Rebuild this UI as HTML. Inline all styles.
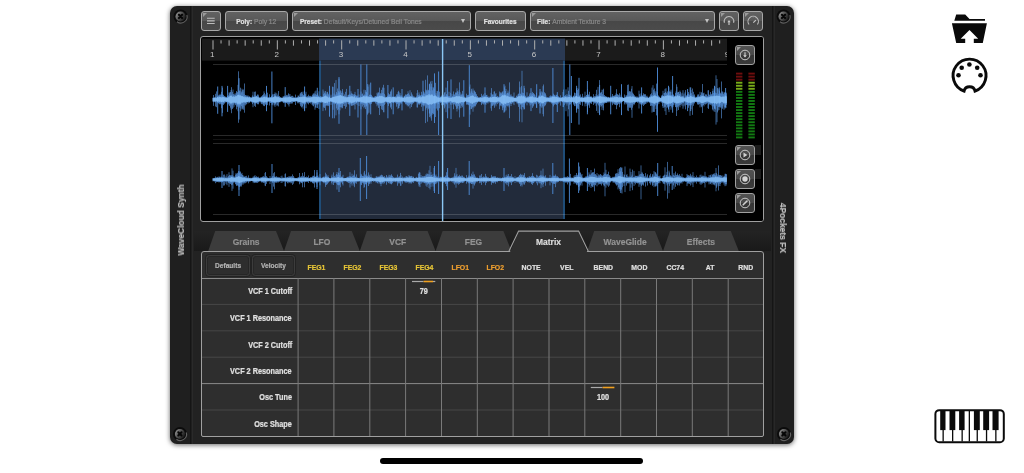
<!DOCTYPE html>
<html><head><meta charset="utf-8">
<style>
*{margin:0;padding:0;box-sizing:border-box}
html,body{width:1024px;height:473px;overflow:hidden;background:#fff;font-family:"Liberation Sans",sans-serif}
body>*{will-change:transform}
.abs{position:absolute}
#panel{position:absolute;left:170px;top:6px;width:624px;height:438px;border-radius:7px;background:#1f1f1f;box-shadow:0 1px 5px rgba(0,0,0,.6)}
#main{position:absolute;left:23px;top:0;width:580px;height:438px;background:#222}
.vl{position:absolute;top:0;height:438px;width:1px}
.screw{position:absolute;width:13px;height:13px;border-radius:50%;background:radial-gradient(circle at 45% 40%,#555 0,#3a3a3a 45%,#1a1a1a 75%);box-shadow:0 0 0 1px #0c0c0c, 1px 1px 1px rgba(255,255,255,.12)}
.screw:after{content:"";position:absolute;left:3px;top:3px;width:7px;height:7px;background:linear-gradient(45deg,transparent 40%,#0a0a0a 40%,#0a0a0a 60%,transparent 60%),linear-gradient(-45deg,transparent 40%,#0a0a0a 40%,#0a0a0a 60%,transparent 60%)}
.btn{position:absolute;top:11px;height:20px;border:1px solid #a8a8a8;border-radius:3px;background:linear-gradient(#626262 0,#585858 50%,#474747 50%,#4b4b4b 100%);color:#e2e2e2;font-size:7.55px;font-weight:bold;line-height:19.5px;white-space:nowrap;overflow:hidden}
.btn .c{position:absolute;left:1px;top:1px;width:0;height:0;border-top:4px solid #9a9a9a;border-right:4px solid transparent}
.btn .dim{color:#8a8a8a;font-weight:normal;font-size:7.8px}
i.x{font-style:normal;display:inline-block;transform:scaleX(0.86);transform-origin:50% 50%;-webkit-text-stroke:0.22px currentColor}
i.l{transform-origin:0 50%}
i.r{transform-origin:100% 50%}
.sbtn{position:absolute;left:735.3px;width:20.4px;height:20px;border:1px solid #a0a0a0;border-radius:3px;background:linear-gradient(#525252 0,#494949 50%,#363636 50%,#3a3a3a 100%)}
.sbtn .c{position:absolute;left:1px;top:1px;width:0;height:0;border-top:4px solid #9a9a9a;border-right:4px solid transparent}
#wbox{position:absolute;left:200px;top:36px;width:564px;height:186px;border:1px solid #a0a0a0;border-radius:3px;background:#000;overflow:hidden}
.tab{position:absolute;top:231px;height:21px}
.tabt{position:absolute;top:231px;height:21px;line-height:21px;text-align:center;color:#9a9a9a;font-size:9.5px;font-weight:bold}
#mtx{position:absolute;left:201px;top:251px;width:563px;height:186px;border:1px solid #a0a0a0;border-radius:3px 3px 2px 2px;background:#2e2e2e}
.hd{position:absolute;top:263px;width:36px;text-align:center;font-size:8px;font-weight:bold;color:#e0e0e0;line-height:10px}
.rl{position:absolute;left:203px;width:89px;text-align:right;font-size:8.47px;font-weight:bold;color:#e0e0e0;line-height:10px}
.mb{position:absolute;top:255px;height:21px;border:1px solid #3c3c3c;box-shadow:0 0 0 1px #222, inset 0 0 0 1px #262626;border-radius:3.5px;font-size:7.65px;font-weight:bold;color:#b4b4b4;text-align:center;line-height:19px}
.side{position:absolute;font-size:9.35px;font-weight:bold;color:#bebebe;white-space:nowrap}
</style></head><body>
<div id="panel">
  <div class="vl" style="left:20px;background:#151515"></div>
  <div id="main"></div>
  <div class="vl" style="left:22px;background:#2a2a2a"></div>
  <div class="vl" style="left:602px;background:#151515"></div>
  <div class="vl" style="left:604px;background:#282828"></div>
</div>
<svg width="0" height="0" style="position:absolute"><defs><linearGradient id="sg" x1="0" y1="0" x2="1" y2="0.6"><stop offset="0" stop-color="#a8a8a8"/><stop offset="0.45" stop-color="#5c5c5c"/><stop offset="1" stop-color="#1a1a1a"/></linearGradient></defs></svg>
<svg class="abs" style="left:172px;top:8px" width="18" height="18" viewBox="-8.6 -8.5 18 18">
<circle r="7" fill="#0b0b0b"/>
<path d="M6.3 -1.5A6.3 6.3 0 0 1 -3.6 5.2" fill="none" stroke="#6c6c6c" stroke-width="1.1" opacity="0.9"/>
<circle r="5.1" fill="url(#sg)"/>
<path d="M-1.7 -1.7L1.5 1.5M1.5 -1.7L-1.7 1.5" stroke="#050505" stroke-width="2" stroke-linecap="round"/>
</svg><svg class="abs" style="left:775px;top:8px" width="18" height="18" viewBox="-8.6 -8.5 18 18">
<circle r="7" fill="#0b0b0b"/>
<path d="M6.3 -1.5A6.3 6.3 0 0 1 -3.6 5.2" fill="none" stroke="#6c6c6c" stroke-width="1.1" opacity="0.9"/>
<circle r="5.1" fill="url(#sg)"/>
<path d="M-1.7 -1.7L1.5 1.5M1.5 -1.7L-1.7 1.5" stroke="#050505" stroke-width="2" stroke-linecap="round"/>
</svg><svg class="abs" style="left:171px;top:424.5px" width="18" height="18" viewBox="-9 -9 18 18">
<circle r="7" fill="#0b0b0b"/>
<path d="M6.3 -1.5A6.3 6.3 0 0 1 -3.6 5.2" fill="none" stroke="#6c6c6c" stroke-width="1.1" opacity="0.9"/>
<circle r="5.1" fill="url(#sg)"/>
<path d="M-1.7 -1.7L1.5 1.5M1.5 -1.7L-1.7 1.5" stroke="#050505" stroke-width="2" stroke-linecap="round"/>
</svg><svg class="abs" style="left:774.5px;top:424.5px" width="18" height="18" viewBox="-9 -9 18 18">
<circle r="7" fill="#0b0b0b"/>
<path d="M6.3 -1.5A6.3 6.3 0 0 1 -3.6 5.2" fill="none" stroke="#6c6c6c" stroke-width="1.1" opacity="0.9"/>
<circle r="5.1" fill="url(#sg)"/>
<path d="M-1.7 -1.7L1.5 1.5M1.5 -1.7L-1.7 1.5" stroke="#050505" stroke-width="2" stroke-linecap="round"/>
</svg>

<div class="side" style="left:181px;top:220px;transform:translate(-50%,-50%) rotate(-90deg)"><i class="x" style="transform:scaleX(0.9)">WaveCloud Synth</i></div>
<div class="side" style="left:783px;top:228px;transform:translate(-50%,-50%) rotate(90deg)"><i class="x" style="transform:scaleX(0.9)">4Pockets FX</i></div>

<!-- toolbar -->
<div class="btn" style="left:201px;width:20px"><span class="c"></span>
  <svg class="abs" style="left:0;top:0" width="18" height="18"><path d="M5 6.3H12.7M5 8.9H12.7M5 11.5H12.7" stroke="#bdbdbd" stroke-width="1.1"/></svg>
</div>
<div class="btn" style="left:225px;width:63px;text-align:center"><i class="x">Poly: <span class="dim">Poly 12</span></i></div>
<div class="btn" style="left:292px;width:179px;padding-left:7px"><span class="c"></span><i class="x l">Preset: <span class="dim">Default/Keys/Detuned Bell Tones</span></i>
  <div class="abs" style="left:167.8px;top:7.2px;width:0;height:0;border-left:2.7px solid transparent;border-right:2.7px solid transparent;border-top:4px solid #c4c4c4"></div></div>
<div class="btn" style="left:475px;width:51px;text-align:center"><i class="x">Favourites</i></div>
<div class="btn" style="left:530px;width:185px;padding-left:6px"><span class="c"></span><i class="x l">File: <span class="dim">Ambient Texture 3</span></i>
  <div class="abs" style="left:173.6px;top:7.2px;width:0;height:0;border-left:2.7px solid transparent;border-right:2.7px solid transparent;border-top:4px solid #c4c4c4"></div></div>
<div class="btn" style="left:719px;width:20px"><span class="c"></span>
  <svg class="abs" style="left:0;top:0" width="18" height="18" viewBox="0 0 18 18"><path d="M4.45 10.8A4.8 4.8 0 1 1 13.55 10.8" fill="none" stroke="#bdbdbd" stroke-width="1.1"/><path d="M9 8.0L10.7 10.3H7.3Z" fill="#c8c8c8"/><rect x="8.4" y="10" width="1.2" height="3" fill="#c4c4c4"/></svg></div>
<div class="btn" style="left:743px;width:20px"><span class="c"></span>
  <svg class="abs" style="left:0;top:0" width="18" height="18" viewBox="0 0 18 18"><path d="M5.0 12.5A5.2 5.2 0 1 1 13.4 12.5" fill="none" stroke="#bdbdbd" stroke-width="1.1"/><path d="M9.3 10.7L11.9 8.1" stroke="#c4c4c4" stroke-width="1.2"/><path d="M9.2 4.6V5.5M6.6 5.4L7 6.1M11.8 5.4L11.4 6.1" stroke="#aaa" stroke-width="0.6"/></svg></div>

<!-- waveform -->
<div id="wbox">
  <svg class="abs" style="left:-201px;top:-37px" width="1024" height="260" viewBox="0 0 1024 260">
    <rect x="202" y="38.6" width="525" height="22" fill="#1b1b1b"/>
    <rect x="319" y="38.6" width="246" height="22" fill="#2b3a53"/>
    <rect x="319" y="60.6" width="246" height="158.4" fill="#222b3b"/>
    <rect x="319" y="60.6" width="2" height="158.4" fill="#1f4d78"/>
    <rect x="563" y="60.6" width="2" height="158.4" fill="#1f4d78"/>
    <path d="M213 64.5H727M213 135.5H727M213 143.5H727M213 214.5H727" stroke="rgba(255,255,255,0.16)" stroke-width="1"/>
    <path d="M213 139.5H727" stroke="rgba(255,255,255,0.07)" stroke-width="1"/>
    <defs><clipPath id="rc"><rect x="202" y="38.6" width="525" height="22"/></clipPath></defs><g clip-path="url(#rc)"><g id="ticks" stroke="#b0b0b0" stroke-width="1"><path d="M213.00 40.3V49.5"/><path d="M221.04 40.3V43.5"/><path d="M229.09 40.3V45.7"/><path d="M237.13 40.3V43.5"/><path d="M245.17 40.3V45.7"/><path d="M253.21 40.3V43.5"/><path d="M261.25 40.3V45.7"/><path d="M269.30 40.3V43.5"/><path d="M277.34 40.3V49.5"/><path d="M285.38 40.3V43.5"/><path d="M293.43 40.3V45.7"/><path d="M301.47 40.3V43.5"/><path d="M309.51 40.3V45.7"/><path d="M317.55 40.3V43.5"/><path d="M325.60 40.3V45.7"/><path d="M333.64 40.3V43.5"/><path d="M341.68 40.3V49.5"/><path d="M349.72 40.3V43.5"/><path d="M357.76 40.3V45.7"/><path d="M365.81 40.3V43.5"/><path d="M373.85 40.3V45.7"/><path d="M381.89 40.3V43.5"/><path d="M389.94 40.3V45.7"/><path d="M397.98 40.3V43.5"/><path d="M406.02 40.3V49.5"/><path d="M414.06 40.3V43.5"/><path d="M422.11 40.3V45.7"/><path d="M430.15 40.3V43.5"/><path d="M438.19 40.3V45.7"/><path d="M446.23 40.3V43.5"/><path d="M454.27 40.3V45.7"/><path d="M462.32 40.3V43.5"/><path d="M470.36 40.3V49.5"/><path d="M478.40 40.3V43.5"/><path d="M486.44 40.3V45.7"/><path d="M494.49 40.3V43.5"/><path d="M502.53 40.3V45.7"/><path d="M510.57 40.3V43.5"/><path d="M518.62 40.3V45.7"/><path d="M526.66 40.3V43.5"/><path d="M534.70 40.3V49.5"/><path d="M542.74 40.3V43.5"/><path d="M550.79 40.3V45.7"/><path d="M558.83 40.3V43.5"/><path d="M566.87 40.3V45.7"/><path d="M574.91 40.3V43.5"/><path d="M582.96 40.3V45.7"/><path d="M591.00 40.3V43.5"/><path d="M599.04 40.3V49.5"/><path d="M607.08 40.3V43.5"/><path d="M615.12 40.3V45.7"/><path d="M623.17 40.3V43.5"/><path d="M631.21 40.3V45.7"/><path d="M639.25 40.3V43.5"/><path d="M647.30 40.3V45.7"/><path d="M655.34 40.3V43.5"/><path d="M663.38 40.3V49.5"/><path d="M671.42 40.3V43.5"/><path d="M679.47 40.3V45.7"/><path d="M687.51 40.3V43.5"/><path d="M695.55 40.3V45.7"/><path d="M703.59 40.3V43.5"/><path d="M711.63 40.3V45.7"/><path d="M719.68 40.3V43.5"/><path d="M727.72 40.3V49.5"/></g>
    <g font-family="Liberation Sans" font-size="8" fill="#c8c8c8" text-anchor="middle"><text x="212.35" y="57.3">1</text><text x="276.69" y="57.3">2</text><text x="341.03" y="57.3">3</text><text x="405.37" y="57.3">4</text><text x="469.71" y="57.3">5</text><text x="534.05" y="57.3">6</text><text x="598.39" y="57.3">7</text><text x="662.73" y="57.3">8</text><text x="727.07" y="57.3">9</text></g></g>
    <g stroke="#4f8edc" stroke-width="0.9"><path d="M217.7 86.5V113.8M222.0 85.9V116.3M227.6 85.9V111.9M239.0 78.2V119.5M266.5 85.9V111.2M271.9 71.5V123.3M285.2 87.1V106.8M304.6 86.5V111.2M317.3 87.8V108.0M329.5 85.8V116.7M332.7 86.6V118.3M339.0 77.0V123.8M349.8 85.8V115.9M358.0 89.0V117.5M360.9 64.4V135.0M366.8 64.4V135.0M370.7 82.6V114.3M387.9 85.0V118.3M393.2 87.4V114.3M402.0 89.0V110.4M423.0 80.7V111.1M429.4 84.2V113.5M434.5 73.4V123.0M438.6 71.5V135.0M447.6 81.0V118.3M451.0 79.4V119.0M463.8 80.2V116.7M469.3 65.2V127.0M485.0 87.4V112.7M504.0 84.2V112.7M524.0 85.8V109.5M531.0 88.2V111.1M536.7 84.2V108.0M540.0 89.0V113.5M552.9 68.0V123.0M557.3 92.1V112.0M569.8 64.4V135.0M571.4 76.0V123.0M576.6 85.8V112.7M579.0 77.8V124.6M587.4 81.0V114.3M599.6 85.0V115.1M610.7 85.8V114.3M621.5 84.2V115.1M641.6 87.4V113.5M657.5 67.5V131.8M668.5 85.8V109.5M672.6 76.0V112.7M687.6 89.0V111.1M690.7 87.4V111.1M714.5 85.8V108.8M719.3 87.4V106.4M725.6 88.0V107.0M239.0 165.0V196.0M272.0 164.0V193.0M339.0 168.0V192.0M360.3 158.0V201.0M366.6 156.0V199.0M434.5 166.0V193.0M438.6 161.0V194.0M469.2 161.0V195.0M447.6 168.0V190.0M552.8 163.0V194.0M569.4 158.5V203.0M578.6 162.5V193.0M620.8 167.0V193.0M657.7 163.0V196.0M672.2 166.0V190.0M587.4 168.0V191.0M504.0 168.0V191.0M317.0 170.0V189.0M222.0 171.0V188.0"/></g>
<g stroke="#5c9be8" stroke-width="0.6"><path d="M213.0 97.6V101.6M213.5 95.0V105.9M214.0 97.4V101.7M214.5 97.9V101.7M215.0 96.9V102.3M215.5 93.8V106.5M216.0 97.7V101.9M216.5 91.4V107.2M217.0 96.5V102.5M217.5 97.0V102.3M218.0 95.5V103.4M218.5 95.9V103.0M219.0 94.9V103.5M219.5 95.2V103.8M220.0 93.8V104.6M220.5 95.2V103.5M221.0 94.6V103.9M221.5 91.8V108.2M222.0 94.1V104.1M222.5 87.6V112.9M223.0 94.6V104.5M223.5 95.1V104.9M224.0 96.7V103.3M224.5 96.2V103.6M225.0 96.2V102.7M225.5 97.7V101.4M226.0 97.1V102.4M226.5 97.8V101.8M227.0 96.8V102.2M227.5 96.0V102.5M228.0 96.0V104.0M228.5 95.3V103.7M229.0 92.5V105.3M229.5 93.4V106.0M230.0 92.1V104.9M230.5 92.1V107.7M231.0 90.0V109.6M231.5 87.2V113.2M232.0 94.4V105.2M232.5 91.8V109.0M233.0 89.6V108.0M233.5 94.2V104.7M234.0 94.1V106.8M234.5 95.1V103.1M235.0 93.3V104.4M235.5 94.7V105.2M236.0 93.2V104.2M236.5 91.0V109.3M237.0 92.3V106.6M237.5 92.2V106.7M238.0 84.9V111.2M238.5 71.3V122.8M239.0 90.6V106.3M239.5 90.7V107.7M240.0 93.6V105.7M240.5 87.7V111.3M241.0 91.2V108.6M241.5 92.3V106.2M242.0 88.7V109.6M242.5 89.8V108.8M243.0 91.7V107.5M243.5 89.5V109.7M244.0 94.0V104.8M244.5 83.5V112.7M245.0 95.5V103.2M245.5 95.0V105.4M246.0 95.6V103.8M246.5 95.5V104.4M247.0 97.4V102.0M247.5 95.8V102.2M248.0 95.3V103.6M248.5 96.7V102.1M249.0 96.7V102.9M249.5 96.3V102.7M250.0 97.2V102.0M250.5 97.1V101.3M251.0 97.8V101.4M251.5 97.6V102.0M252.0 96.7V102.7M252.5 95.4V104.1M253.0 91.7V107.2M253.5 97.1V102.4M254.0 95.9V102.8M254.5 91.8V105.9M255.0 94.9V104.3M255.5 91.5V106.9M256.0 96.1V103.1M256.5 95.8V103.4M257.0 95.6V102.9M257.5 94.6V104.0M258.0 94.4V104.5M258.5 95.4V104.1M259.0 97.3V101.7M259.5 97.4V102.4M260.0 98.0V101.3M260.5 97.3V102.0M261.0 96.8V103.3M261.5 96.5V104.1M262.0 96.0V102.6M262.5 95.3V103.9M263.0 95.1V104.7M263.5 94.2V105.5M264.0 91.4V106.1M264.5 93.0V106.1M265.0 96.1V103.5M265.5 94.4V104.5M266.0 96.2V104.8M266.5 96.4V102.9M267.0 95.4V103.3M267.5 92.7V105.1M268.0 97.9V101.5M268.5 97.2V101.6M269.0 97.4V101.7M269.5 94.3V105.5M270.0 97.0V102.3M270.5 97.1V103.0M271.0 96.9V103.0M271.5 96.1V103.1M272.0 95.5V105.1M272.5 94.6V103.6M273.0 93.9V105.4M273.5 96.8V102.8M274.0 94.3V103.6M274.5 94.0V105.4M275.0 92.4V106.9M275.5 94.5V104.1M276.0 92.8V104.9M276.5 96.0V102.8M277.0 93.6V106.1M277.5 95.4V105.2M278.0 96.7V102.1M278.5 91.0V106.4M279.0 96.0V103.2M279.5 96.2V102.0M280.0 97.7V102.0M280.5 97.2V102.2M281.0 97.7V101.2M281.5 97.7V101.2M282.0 98.0V101.7M282.5 98.0V101.2M283.0 96.4V102.3M283.5 96.4V102.9M284.0 96.8V103.2M284.5 95.7V102.7M285.0 96.6V102.4M285.5 96.6V102.4M286.0 96.0V103.0M286.5 95.2V103.1M287.0 94.8V103.1M287.5 95.4V104.2M288.0 96.7V102.9M288.5 93.3V104.7M289.0 94.2V106.5M289.5 95.8V103.6M290.0 94.1V103.9M290.5 96.6V102.4M291.0 96.6V103.6M291.5 96.2V102.7M292.0 95.6V103.9M292.5 96.0V102.8M293.0 97.9V101.6M293.5 96.6V102.0M294.0 97.5V101.8M294.5 97.5V101.8M295.0 97.5V101.6M295.5 94.6V105.0M296.0 97.8V101.3M296.5 97.3V101.3M297.0 97.4V101.7M297.5 97.0V102.7M298.0 95.5V103.5M298.5 96.0V102.5M299.0 95.4V102.6M299.5 96.9V102.1M300.0 93.7V104.2M300.5 92.7V106.2M301.0 94.2V104.6M301.5 91.9V107.4M302.0 92.5V106.7M302.5 94.1V106.3M303.0 91.6V108.6M303.5 95.1V104.0M304.0 95.0V104.7M304.5 90.8V110.3M305.0 95.2V103.9M305.5 93.7V104.3M306.0 91.8V108.2M306.5 96.6V102.5M307.0 97.4V101.6M307.5 96.3V103.4M308.0 95.9V103.2M308.5 94.7V104.4M309.0 96.9V101.4M309.5 96.1V103.0M310.0 95.7V102.3M310.5 96.2V103.5M311.0 96.4V102.1M311.5 96.8V102.5M312.0 95.8V104.7M312.5 95.1V104.5M313.0 93.7V105.9M313.5 93.5V106.3M314.0 95.0V103.8M314.5 93.4V104.5M315.0 91.4V109.7M315.5 94.2V107.4M316.0 90.5V107.8M316.5 94.7V104.7M317.0 95.0V103.7M317.5 93.2V104.4M318.0 94.7V104.7M318.5 96.2V103.7M319.0 91.3V109.0M319.5 96.8V102.0M320.0 96.4V102.9M320.5 96.1V102.6M321.0 96.5V102.3M321.5 96.9V102.7M322.0 96.4V102.1M322.5 96.8V102.6M323.0 89.5V111.1M323.5 94.1V106.8M324.0 91.3V107.9M324.5 92.8V107.8M325.0 94.0V105.9M325.5 91.0V110.4M326.0 93.4V105.7M326.5 94.5V105.2M327.0 91.9V105.8M327.5 91.9V105.2M328.0 93.4V106.1M328.5 94.4V105.7M329.0 95.6V104.4M329.5 95.9V103.7M330.0 96.6V102.1M330.5 98.0V101.8M331.0 94.7V104.9M331.5 98.1V101.6M332.0 96.8V102.1M332.5 97.4V102.3M333.0 87.0V109.8M333.5 96.7V103.3M334.0 93.5V104.3M334.5 83.1V118.3M335.0 95.6V103.7M335.5 94.5V104.0M336.0 80.1V115.4M336.5 92.1V108.4M337.0 94.4V105.3M337.5 88.5V110.2M338.0 93.1V105.2M338.5 91.2V109.4M339.0 78.6V114.3M339.5 92.5V106.9M340.0 91.4V110.4M340.5 90.3V107.3M341.0 95.0V104.2M341.5 92.9V107.3M342.0 91.2V108.4M342.5 89.1V107.9M343.0 92.7V106.1M343.5 95.9V104.2M344.0 96.0V103.1M344.5 94.4V106.0M345.0 96.2V103.1M345.5 91.8V108.7M346.0 96.6V103.3M346.5 88.9V106.8M347.0 97.1V101.9M347.5 96.6V102.5M348.0 95.0V104.0M348.5 95.0V104.4M349.0 94.4V104.2M349.5 94.8V104.6M350.0 94.5V103.6M350.5 94.8V103.6M351.0 91.3V105.4M351.5 93.5V105.8M352.0 93.3V105.7M352.5 94.1V105.5M353.0 96.2V102.9M353.5 94.6V105.0M354.0 94.2V105.6M354.5 94.3V104.3M355.0 91.9V109.5M355.5 94.9V103.7M356.0 95.5V103.9M356.5 96.0V103.0M357.0 95.2V104.9M357.5 96.2V102.2M358.0 96.8V102.2M358.5 97.6V102.0M359.0 94.5V106.1M359.5 97.1V101.7M360.0 97.5V102.3M360.5 95.7V103.5M361.0 91.6V109.3M361.5 96.9V103.4M362.0 94.1V104.0M362.5 93.5V106.6M363.0 95.7V102.7M363.5 95.3V104.9M364.0 89.7V108.3M364.5 94.5V106.9M365.0 95.1V104.3M365.5 90.1V109.1M366.0 91.9V106.7M366.5 91.9V106.2M367.0 93.0V105.2M367.5 84.1V114.7M368.0 86.6V113.5M368.5 96.1V103.0M369.0 84.5V112.7M369.5 94.9V103.7M370.0 94.5V104.6M370.5 94.9V103.7M371.0 94.7V103.8M371.5 95.1V103.7M372.0 96.0V102.2M372.5 96.7V101.7M373.0 97.1V102.2M373.5 97.8V101.8M374.0 97.2V102.0M374.5 96.8V102.0M375.0 96.3V102.2M375.5 96.2V102.8M376.0 96.1V104.1M376.5 96.4V102.2M377.0 92.8V106.3M377.5 94.3V104.4M378.0 92.4V105.2M378.5 92.4V107.9M379.0 93.2V104.4M379.5 87.6V115.0M380.0 95.8V103.6M380.5 93.2V106.0M381.0 94.1V104.7M381.5 89.9V109.4M382.0 92.9V106.4M382.5 87.5V110.1M383.0 93.0V106.0M383.5 84.8V112.2M384.0 87.8V112.3M384.5 93.9V105.0M385.0 95.4V104.0M385.5 97.7V101.4M386.0 97.3V102.5M386.5 96.9V102.1M387.0 96.9V102.9M387.5 96.1V103.9M388.0 95.6V102.6M388.5 93.2V105.9M389.0 94.6V103.6M389.5 94.6V103.2M390.0 94.0V103.8M390.5 91.7V107.6M391.0 91.2V106.5M391.5 89.4V109.3M392.0 96.4V102.4M392.5 96.9V102.5M393.0 96.5V103.1M393.5 96.7V103.1M394.0 96.9V101.6M394.5 96.8V102.1M395.0 96.3V103.2M395.5 96.4V102.3M396.0 96.9V103.2M396.5 94.3V106.7M397.0 95.1V104.2M397.5 94.2V103.9M398.0 92.1V109.1M398.5 90.8V108.0M399.0 91.8V108.0M399.5 94.7V105.8M400.0 93.0V104.6M400.5 95.9V103.2M401.0 94.8V103.5M401.5 95.8V103.6M402.0 97.4V101.8M402.5 96.6V101.9M403.0 97.5V101.1M403.5 97.5V101.5M404.0 96.4V102.1M404.5 96.0V102.4M405.0 95.5V102.6M405.5 94.4V104.3M406.0 95.3V103.5M406.5 94.9V104.3M407.0 94.1V105.5M407.5 94.0V105.1M408.0 91.3V106.5M408.5 93.2V106.2M409.0 94.2V103.9M409.5 95.0V105.2M410.0 90.2V108.4M410.5 96.1V104.0M411.0 96.2V103.8M411.5 92.4V107.0M412.0 94.1V104.8M412.5 95.4V103.9M413.0 95.9V102.8M413.5 97.1V103.2M414.0 96.2V102.6M414.5 97.5V101.7M415.0 97.1V101.4M415.5 98.0V101.7M416.0 97.0V102.2M416.5 96.4V102.3M417.0 93.2V107.4M417.5 90.1V107.5M418.0 95.1V102.9M418.5 95.4V104.1M419.0 92.4V104.8M419.5 94.5V104.4M420.0 95.8V103.6M420.5 95.6V103.4M421.0 95.0V103.6M421.5 91.8V106.8M422.0 94.9V103.3M422.5 95.1V104.7M423.0 93.7V105.4M423.5 91.2V105.4M424.0 92.0V106.4M424.5 93.4V105.5M425.0 94.1V104.0M425.5 79.8V123.1M426.0 89.6V109.6M426.5 90.3V107.9M427.0 91.6V105.3M427.5 75.4V121.7M428.0 90.3V107.6M428.5 89.8V109.3M429.0 91.2V108.0M429.5 83.6V117.1M430.0 91.1V108.4M430.5 81.5V116.4M431.0 86.7V118.3M431.5 83.7V120.7M432.0 80.9V114.8M432.5 90.3V113.0M433.0 87.2V114.3M433.5 87.6V113.9M434.0 89.1V108.3M434.5 94.0V104.0M435.0 94.8V105.6M435.5 82.8V117.0M436.0 93.1V108.7M436.5 95.8V103.3M437.0 90.9V108.4M437.5 91.2V110.5M438.0 94.8V104.3M438.5 96.2V104.1M439.0 97.3V101.9M439.5 91.7V108.2M440.0 96.4V102.1M440.5 96.9V103.0M441.0 96.8V101.6M441.5 95.5V105.3M442.0 96.8V102.7M442.5 96.1V103.4M443.0 95.9V104.2M443.5 94.6V105.1M444.0 95.9V104.5M444.5 92.7V108.4M445.0 92.0V106.6M445.5 95.8V103.6M446.0 87.6V112.2M446.5 94.1V104.4M447.0 94.8V104.0M447.5 95.7V102.9M448.0 96.2V102.9M448.5 96.2V102.6M449.0 91.8V108.3M449.5 96.0V102.4M450.0 97.0V102.9M450.5 92.8V104.6M451.0 97.6V101.9M451.5 96.9V103.1M452.0 93.9V104.9M452.5 96.2V103.0M453.0 95.7V103.9M453.5 91.5V109.2M454.0 94.2V104.3M454.5 94.6V104.4M455.0 95.8V103.2M455.5 92.7V105.6M456.0 92.3V106.7M456.5 92.8V108.9M457.0 88.3V111.5M457.5 91.1V108.5M458.0 92.0V106.2M458.5 94.3V105.8M459.0 90.3V109.6M459.5 82.4V117.4M460.0 91.9V108.3M460.5 95.3V103.9M461.0 93.5V107.9M461.5 94.8V105.8M462.0 94.4V104.8M462.5 90.9V107.3M463.0 94.1V105.6M463.5 95.6V103.8M464.0 96.4V102.2M464.5 97.5V102.2M465.0 97.5V101.4M465.5 98.2V101.0M466.0 97.4V101.9M466.5 93.7V104.7M467.0 95.9V103.8M467.5 95.0V104.7M468.0 96.2V104.0M468.5 94.8V105.2M469.0 95.0V104.7M469.5 86.7V109.8M470.0 84.5V114.6M470.5 93.4V106.2M471.0 91.5V109.2M471.5 88.8V109.0M472.0 90.5V107.9M472.5 92.7V107.1M473.0 88.5V111.7M473.5 93.5V106.6M474.0 90.5V107.6M474.5 90.7V106.3M475.0 91.8V105.8M475.5 92.2V106.4M476.0 93.9V104.7M476.5 94.4V104.2M477.0 96.3V102.7M477.5 96.0V102.6M478.0 97.7V102.0M478.5 97.8V101.2M479.0 97.4V101.9M479.5 97.6V101.9M480.0 97.4V101.4M480.5 97.2V102.0M481.0 97.1V102.4M481.5 93.8V105.1M482.0 96.4V103.9M482.5 95.5V103.4M483.0 96.0V102.7M483.5 94.4V104.5M484.0 96.6V103.6M484.5 96.2V103.1M485.0 93.1V104.6M485.5 95.9V103.8M486.0 95.3V104.8M486.5 95.0V102.9M487.0 94.8V103.2M487.5 96.8V102.5M488.0 96.7V103.6M488.5 97.8V101.3M489.0 96.3V102.5M489.5 97.5V101.6M490.0 97.1V102.5M490.5 96.6V102.4M491.0 92.8V108.3M491.5 88.1V110.8M492.0 94.4V105.9M492.5 94.9V105.7M493.0 94.0V105.6M493.5 95.6V104.3M494.0 91.7V105.3M494.5 91.3V107.8M495.0 95.0V104.0M495.5 93.8V104.5M496.0 93.1V106.3M496.5 96.7V103.3M497.0 96.8V102.5M497.5 95.9V104.1M498.0 96.5V101.9M498.5 96.9V103.2M499.0 97.8V101.7M499.5 91.5V109.2M500.0 94.1V105.6M500.5 92.7V105.2M501.0 92.2V106.2M501.5 93.6V104.3M502.0 92.8V106.3M502.5 91.8V110.2M503.0 91.1V108.1M503.5 94.5V106.7M504.0 93.4V105.6M504.5 87.3V111.8M505.0 85.7V111.5M505.5 91.0V107.5M506.0 89.0V110.4M506.5 94.4V105.8M507.0 93.1V105.1M507.5 92.8V106.4M508.0 90.6V105.7M508.5 93.4V105.4M509.0 92.2V107.4M509.5 82.4V118.2M510.0 95.9V103.0M510.5 95.4V104.1M511.0 94.2V106.0M511.5 95.8V104.0M512.0 96.5V102.7M512.5 96.6V102.3M513.0 95.9V103.7M513.5 96.9V101.9M514.0 92.5V105.1M514.5 97.9V101.4M515.0 98.1V101.1M515.5 97.4V101.9M516.0 97.8V101.7M516.5 95.8V102.4M517.0 95.6V103.6M517.5 96.5V102.8M518.0 94.4V104.3M518.5 93.8V106.9M519.0 93.5V104.3M519.5 81.5V121.7M520.0 87.3V108.8M520.5 93.9V104.6M521.0 93.5V104.6M521.5 86.1V109.6M522.0 70.8V122.3M522.5 92.6V107.0M523.0 95.1V104.0M523.5 93.0V107.5M524.0 94.5V105.1M524.5 88.2V109.1M525.0 95.3V103.5M525.5 96.0V103.1M526.0 97.0V102.1M526.5 97.4V102.0M527.0 92.3V105.3M527.5 97.3V101.8M528.0 96.3V102.6M528.5 96.4V102.7M529.0 96.3V103.3M529.5 94.5V103.4M530.0 93.1V105.6M530.5 96.3V103.0M531.0 92.9V104.9M531.5 95.3V103.6M532.0 94.1V103.4M532.5 91.9V107.9M533.0 93.5V106.6M533.5 93.0V105.7M534.0 94.3V103.3M534.5 94.3V103.4M535.0 95.2V104.4M535.5 96.7V103.6M536.0 96.8V102.4M536.5 92.7V107.5M537.0 97.6V102.5M537.5 97.9V102.0M538.0 97.7V101.5M538.5 96.2V103.6M539.0 95.2V103.5M539.5 95.5V102.8M540.0 92.3V105.7M540.5 93.3V106.1M541.0 91.3V107.4M541.5 95.0V104.2M542.0 91.7V107.8M542.5 92.5V106.3M543.0 86.2V114.1M543.5 84.5V116.4M544.0 94.3V104.2M544.5 92.2V106.4M545.0 93.1V105.7M545.5 93.6V105.1M546.0 95.4V103.8M546.5 97.2V102.4M547.0 97.7V101.5M547.5 97.0V102.2M548.0 98.2V101.3M548.5 97.2V102.1M549.0 98.2V101.5M549.5 96.6V102.3M550.0 96.2V102.0M550.5 95.4V102.5M551.0 96.8V102.2M551.5 95.8V103.6M552.0 96.3V102.6M552.5 96.4V103.4M553.0 95.4V104.9M553.5 93.7V106.4M554.0 94.8V104.5M554.5 94.9V104.7M555.0 95.8V103.5M555.5 96.3V104.0M556.0 94.8V104.6M556.5 95.0V104.9M557.0 94.7V103.8M557.5 96.1V103.0M558.0 97.1V101.8M558.5 96.2V103.6M559.0 97.5V102.2M559.5 97.3V102.5M560.0 97.2V102.1M560.5 95.3V105.6M561.0 97.4V101.1M561.5 97.8V101.2M562.0 97.5V101.4M562.5 97.0V102.4M563.0 92.0V107.0M563.5 89.6V107.1M564.0 96.3V102.5M564.5 95.9V105.2M565.0 96.1V102.3M565.5 94.9V103.5M566.0 89.3V111.2M566.5 95.8V103.4M567.0 94.0V105.6M567.5 95.6V103.5M568.0 87.3V116.4M568.5 90.8V109.3M569.0 95.0V103.1M569.5 94.6V104.5M570.0 94.9V104.8M570.5 95.7V104.0M571.0 96.0V102.1M571.5 96.7V102.8M572.0 96.9V102.3M572.5 97.2V101.9M573.0 96.4V102.2M573.5 95.6V104.6M574.0 96.3V103.8M574.5 92.6V105.9M575.0 93.2V106.2M575.5 95.8V103.7M576.0 93.2V105.8M576.5 88.5V109.9M577.0 87.9V108.7M577.5 90.0V108.5M578.0 93.3V106.6M578.5 88.7V109.0M579.0 95.1V103.6M579.5 95.8V104.1M580.0 96.9V102.5M580.5 94.4V104.9M581.0 96.8V101.7M581.5 96.9V102.1M582.0 96.8V102.3M582.5 93.8V105.8M583.0 97.3V102.0M583.5 97.8V101.7M584.0 96.3V102.2M584.5 96.9V102.2M585.0 91.7V106.4M585.5 96.4V103.4M586.0 96.5V104.0M586.5 95.0V103.0M587.0 95.0V106.1M587.5 89.3V112.2M588.0 93.9V104.7M588.5 95.1V104.5M589.0 94.7V105.7M589.5 91.8V107.8M590.0 96.4V103.1M590.5 96.4V103.4M591.0 97.0V103.0M591.5 96.3V104.0M592.0 96.9V101.6M592.5 97.9V101.8M593.0 97.1V102.1M593.5 94.2V104.9M594.0 97.8V101.7M594.5 96.1V103.5M595.0 96.8V103.2M595.5 96.2V103.2M596.0 94.1V105.8M596.5 89.8V110.9M597.0 95.8V104.4M597.5 95.2V103.6M598.0 86.9V113.0M598.5 95.6V104.9M599.0 93.9V106.1M599.5 80.1V114.4M600.0 93.8V107.1M600.5 92.5V105.2M601.0 93.0V105.5M601.5 91.9V106.4M602.0 89.7V109.9M602.5 94.2V105.3M603.0 89.9V107.7M603.5 88.7V110.4M604.0 95.8V103.3M604.5 95.0V103.5M605.0 96.4V103.1M605.5 96.2V102.7M606.0 96.2V103.0M606.5 97.2V103.0M607.0 96.7V103.0M607.5 97.3V101.8M608.0 97.3V102.0M608.5 96.9V102.4M609.0 97.6V101.2M609.5 97.9V101.4M610.0 97.5V102.7M610.5 97.1V101.8M611.0 96.9V101.6M611.5 97.6V101.6M612.0 96.0V103.3M612.5 94.0V105.2M613.0 95.9V102.5M613.5 95.8V103.5M614.0 96.0V103.7M614.5 95.5V104.5M615.0 95.5V104.6M615.5 94.9V104.9M616.0 93.3V104.6M616.5 89.2V109.2M617.0 94.2V105.4M617.5 94.3V105.1M618.0 94.6V104.1M618.5 95.1V103.6M619.0 96.3V103.5M619.5 93.2V107.2M620.0 94.7V104.0M620.5 96.7V102.9M621.0 97.0V102.8M621.5 97.4V102.8M622.0 97.2V102.1M622.5 96.8V101.6M623.0 97.9V101.0M623.5 97.9V100.9M624.0 98.2V101.3M624.5 94.5V104.4M625.0 96.7V102.6M625.5 97.0V102.7M626.0 95.3V104.5M626.5 95.8V103.4M627.0 95.0V103.7M627.5 84.9V110.5M628.0 91.6V107.4M628.5 84.5V111.1M629.0 92.7V105.6M629.5 91.0V107.7M630.0 91.9V107.6M630.5 91.4V107.7M631.0 94.4V105.1M631.5 88.8V109.8M632.0 86.1V117.8M632.5 92.6V107.7M633.0 94.3V105.6M633.5 93.7V104.0M634.0 95.1V104.6M634.5 95.5V104.4M635.0 96.9V103.0M635.5 96.4V102.5M636.0 96.8V102.0M636.5 97.5V101.8M637.0 96.1V102.0M637.5 97.1V102.9M638.0 97.5V101.9M638.5 97.7V102.4M639.0 90.7V108.5M639.5 94.2V103.6M640.0 96.5V102.9M640.5 95.8V103.9M641.0 93.4V104.8M641.5 95.5V104.1M642.0 95.8V103.4M642.5 95.6V104.7M643.0 95.1V103.6M643.5 93.3V106.0M644.0 94.7V103.9M644.5 94.2V104.9M645.0 94.8V103.7M645.5 94.2V103.8M646.0 96.5V103.9M646.5 96.5V102.1M647.0 95.6V102.8M647.5 96.8V102.4M648.0 97.8V102.1M648.5 97.8V101.7M649.0 96.8V102.4M649.5 96.9V102.6M650.0 95.8V103.3M650.5 94.2V106.0M651.0 95.3V105.5M651.5 93.3V105.6M652.0 87.6V112.6M652.5 95.1V105.8M653.0 85.2V111.8M653.5 89.7V111.9M654.0 92.7V106.7M654.5 88.5V111.9M655.0 91.3V105.8M655.5 93.4V104.8M656.0 91.4V109.0M656.5 83.6V115.4M657.0 96.2V102.5M657.5 92.0V105.8M658.0 95.5V104.3M658.5 95.6V102.5M659.0 96.3V103.8M659.5 97.0V101.6M660.0 98.1V101.2M660.5 97.9V102.2M661.0 97.6V101.5M661.5 95.9V102.4M662.0 95.0V103.1M662.5 94.7V106.1M663.0 90.8V107.8M663.5 96.1V102.7M664.0 92.9V107.8M664.5 92.9V106.8M665.0 88.9V111.2M665.5 92.0V106.8M666.0 88.2V115.0M666.5 93.3V105.0M667.0 92.7V108.0M667.5 91.4V107.1M668.0 94.1V106.0M668.5 92.7V108.6M669.0 87.2V112.1M669.5 91.6V106.7M670.0 91.2V105.7M670.5 92.0V106.0M671.0 89.7V109.7M671.5 95.0V106.5M672.0 91.7V107.8M672.5 95.1V103.9M673.0 94.4V106.9M673.5 94.7V105.2M674.0 96.1V102.8M674.5 96.3V103.4M675.0 95.5V105.2M675.5 93.0V107.1M676.0 91.4V107.1M676.5 84.3V116.0M677.0 86.8V110.8M677.5 92.4V107.3M678.0 92.5V105.7M678.5 92.0V110.0M679.0 91.8V106.4M679.5 93.9V105.2M680.0 90.6V107.3M680.5 92.1V104.7M681.0 94.4V104.7M681.5 96.5V103.9M682.0 92.8V105.8M682.5 96.2V103.1M683.0 90.2V108.7M683.5 95.7V103.0M684.0 93.7V106.4M684.5 98.2V101.1M685.0 92.4V105.3M685.5 90.1V109.4M686.0 95.9V103.4M686.5 95.5V105.0M687.0 95.3V104.6M687.5 94.4V104.3M688.0 94.1V105.1M688.5 92.0V107.8M689.0 93.6V105.7M689.5 94.9V105.3M690.0 87.4V115.8M690.5 93.5V105.3M691.0 90.1V109.2M691.5 93.2V105.3M692.0 95.2V104.1M692.5 88.5V114.9M693.0 95.5V103.3M693.5 91.8V105.8M694.0 95.4V103.2M694.5 94.4V103.4M695.0 96.5V102.0M695.5 97.6V101.9M696.0 97.2V102.0M696.5 97.4V102.0M697.0 96.5V102.8M697.5 95.3V104.0M698.0 94.1V105.0M698.5 94.6V104.4M699.0 96.1V103.7M699.5 96.3V104.0M700.0 91.8V107.4M700.5 95.2V103.6M701.0 94.7V105.4M701.5 92.2V107.2M702.0 93.1V106.1M702.5 84.0V113.0M703.0 94.5V105.2M703.5 93.2V105.1M704.0 92.7V106.4M704.5 96.0V104.1M705.0 95.8V102.6M705.5 94.4V104.5M706.0 94.4V104.2M706.5 94.6V103.5M707.0 96.4V103.3M707.5 96.2V102.8M708.0 90.4V108.1M708.5 90.2V109.0M709.0 94.2V105.2M709.5 95.2V103.8M710.0 95.4V103.9M710.5 92.0V104.7M711.0 94.5V104.8M711.5 94.4V104.3M712.0 93.7V106.2M712.5 91.1V109.4M713.0 88.6V110.4M713.5 93.1V106.4M714.0 90.5V111.4M714.5 90.9V108.1M715.0 86.7V112.0M715.5 92.6V109.5M716.0 75.3V124.6M716.5 93.2V105.7M717.0 79.0V122.2M717.5 88.1V112.4M718.0 88.2V110.7M718.5 93.7V107.0M719.0 89.3V110.0M719.5 90.9V107.3M720.0 94.0V105.0M720.5 92.7V107.6M721.0 93.8V106.7M721.5 81.5V118.4M722.0 91.5V108.2M722.5 91.6V108.8M723.0 93.4V106.3M723.5 94.2V104.3M724.0 91.9V109.8M724.5 92.7V107.4M725.0 92.6V108.7M725.5 92.6V107.7M726.0 92.4V108.0M726.5 93.3V105.0M213.0 178.1V181.4M213.5 178.4V180.6M214.0 178.4V181.2M214.5 177.9V181.5M215.0 178.2V181.1M215.5 176.4V183.2M216.0 177.8V181.2M216.5 177.4V182.2M217.0 177.9V182.0M217.5 176.9V181.9M218.0 177.4V181.8M218.5 177.7V181.7M219.0 176.3V182.6M219.5 177.2V181.8M220.0 176.7V181.9M220.5 177.2V182.0M221.0 177.4V182.3M221.5 176.7V182.4M222.0 176.8V182.0M222.5 177.6V182.2M223.0 177.2V182.0M223.5 174.7V185.6M224.0 177.2V181.4M224.5 174.5V185.4M225.0 177.4V181.2M225.5 177.6V181.8M226.0 175.7V183.9M226.5 177.7V181.6M227.0 174.1V185.2M227.5 177.4V181.4M228.0 177.4V182.2M228.5 175.9V183.0M229.0 172.3V186.9M229.5 175.0V183.5M230.0 176.3V182.8M230.5 175.1V184.0M231.0 176.0V183.6M231.5 175.2V185.2M232.0 168.4V190.9M232.5 175.3V184.7M233.0 170.7V188.7M233.5 176.6V182.4M234.0 176.2V182.9M234.5 177.3V182.1M235.0 176.8V182.1M235.5 174.7V184.2M236.0 173.1V184.3M236.5 173.8V185.9M237.0 175.1V185.4M237.5 172.8V185.6M238.0 173.5V185.0M238.5 171.0V186.4M239.0 171.7V189.9M239.5 172.7V187.0M240.0 171.0V186.6M240.5 172.1V186.3M241.0 173.7V185.1M241.5 174.2V186.5M242.0 172.9V184.3M242.5 175.0V182.8M243.0 175.2V184.8M243.5 176.8V182.8M244.0 175.9V183.8M244.5 176.9V182.9M245.0 177.0V181.7M245.5 176.1V183.2M246.0 177.4V181.9M246.5 175.8V182.5M247.0 178.1V181.7M247.5 177.4V181.2M248.0 177.8V181.8M248.5 175.4V183.3M249.0 178.5V181.0M249.5 178.3V181.5M250.0 177.6V181.3M250.5 178.2V181.3M251.0 178.5V180.8M251.5 178.3V180.9M252.0 177.8V180.9M252.5 177.9V181.2M253.0 176.7V182.5M253.5 177.5V181.8M254.0 176.1V183.1M254.5 176.5V182.6M255.0 175.1V182.7M255.5 177.3V182.7M256.0 177.1V182.0M256.5 176.2V182.9M257.0 176.8V182.4M257.5 177.0V182.9M258.0 177.9V181.5M258.5 176.7V182.2M259.0 177.9V181.5M259.5 178.3V181.4M260.0 177.6V181.1M260.5 177.7V181.1M261.0 177.2V181.8M261.5 177.5V182.2M262.0 177.0V182.7M262.5 176.6V181.9M263.0 177.2V182.3M263.5 176.1V182.8M264.0 176.8V182.7M264.5 176.8V182.6M265.0 173.0V185.6M265.5 172.0V186.1M266.0 176.9V182.2M266.5 176.1V183.9M267.0 177.9V181.1M267.5 177.4V181.5M268.0 178.1V181.6M268.5 178.1V181.3M269.0 178.6V180.6M269.5 178.0V181.2M270.0 176.0V184.1M270.5 178.3V181.5M271.0 177.6V181.4M271.5 178.2V181.0M272.0 177.5V181.7M272.5 176.4V182.5M273.0 176.0V182.9M273.5 173.2V186.6M274.0 176.4V182.0M274.5 172.1V189.3M275.0 176.9V182.6M275.5 176.7V182.5M276.0 177.5V182.2M276.5 176.2V182.8M277.0 177.2V182.0M277.5 177.3V181.7M278.0 176.8V182.9M278.5 177.6V181.8M279.0 177.1V181.7M279.5 177.4V181.7M280.0 178.1V180.8M280.5 178.0V180.9M281.0 176.3V182.8M281.5 178.3V180.6M282.0 175.6V183.0M282.5 177.7V181.5M283.0 177.7V181.1M283.5 177.6V181.8M284.0 178.1V180.9M284.5 177.7V181.6M285.0 174.1V186.2M285.5 173.4V186.5M286.0 177.2V182.1M286.5 177.9V181.7M287.0 177.1V181.6M287.5 177.1V182.8M288.0 176.9V183.4M288.5 177.5V181.8M289.0 176.0V182.6M289.5 177.3V182.1M290.0 176.3V182.7M290.5 177.0V182.0M291.0 176.2V183.4M291.5 176.3V182.7M292.0 177.0V181.7M292.5 174.4V184.9M293.0 178.0V181.3M293.5 176.0V183.7M294.0 177.6V181.5M294.5 177.8V181.3M295.0 178.3V181.3M295.5 178.3V180.6M296.0 178.3V180.8M296.5 178.3V180.8M297.0 178.2V181.4M297.5 178.3V181.2M298.0 177.2V181.3M298.5 177.5V181.3M299.0 177.1V181.8M299.5 173.0V184.3M300.0 176.3V183.4M300.5 177.6V181.8M301.0 177.1V182.3M301.5 176.1V183.0M302.0 176.8V183.2M302.5 172.9V187.3M303.0 176.9V182.0M303.5 175.9V182.2M304.0 177.1V181.4M304.5 172.1V187.3M305.0 177.5V182.2M305.5 177.1V181.6M306.0 177.4V181.8M306.5 176.5V181.8M307.0 177.5V181.3M307.5 177.1V181.9M308.0 177.7V181.6M308.5 175.5V183.0M309.0 178.4V181.0M309.5 178.0V181.0M310.0 177.7V181.5M310.5 177.2V182.2M311.0 177.2V181.4M311.5 177.2V182.1M312.0 177.9V181.6M312.5 176.5V183.1M313.0 175.7V183.2M313.5 176.0V183.6M314.0 175.7V182.8M314.5 170.0V187.5M315.0 176.5V182.5M315.5 177.2V181.8M316.0 176.3V183.1M316.5 175.8V183.5M317.0 172.4V187.0M317.5 176.0V182.4M318.0 175.5V182.9M318.5 177.3V181.9M319.0 177.0V181.9M319.5 177.6V181.7M320.0 174.0V185.3M320.5 177.2V181.9M321.0 178.4V180.9M321.5 178.2V181.4M322.0 177.5V181.7M322.5 177.3V181.8M323.0 177.6V182.3M323.5 176.7V182.4M324.0 176.8V183.4M324.5 177.1V182.3M325.0 176.2V182.8M325.5 172.7V186.9M326.0 175.7V184.9M326.5 174.3V184.8M327.0 176.3V182.7M327.5 176.5V184.2M328.0 175.1V182.7M328.5 176.9V182.5M329.0 177.8V181.5M329.5 178.0V181.5M330.0 178.2V181.1M330.5 178.3V181.1M331.0 178.1V181.2M331.5 176.4V182.8M332.0 174.6V184.5M332.5 177.2V181.5M333.0 177.7V182.1M333.5 172.4V185.0M334.0 176.7V182.9M334.5 175.9V182.4M335.0 176.7V182.8M335.5 176.8V182.2M336.0 174.9V183.0M336.5 174.0V183.6M337.0 172.0V189.6M337.5 174.7V184.6M338.0 175.2V185.2M338.5 172.8V185.2M339.0 172.7V184.4M339.5 175.3V185.2M340.0 174.7V183.5M340.5 171.0V187.3M341.0 177.1V181.9M341.5 176.5V182.6M342.0 177.2V182.0M342.5 176.6V184.1M343.0 174.8V185.5M343.5 178.1V181.0M344.0 177.9V181.5M344.5 178.3V180.9M345.0 178.2V181.5M345.5 178.1V181.0M346.0 178.0V181.2M346.5 177.9V181.5M347.0 177.1V181.7M347.5 176.8V182.2M348.0 177.3V182.3M348.5 176.6V183.1M349.0 177.4V181.6M349.5 176.2V182.9M350.0 172.2V187.5M350.5 176.4V182.3M351.0 176.5V184.0M351.5 177.1V182.9M352.0 173.7V185.6M352.5 176.3V182.1M353.0 176.2V182.8M353.5 175.5V183.7M354.0 174.6V185.7M354.5 170.3V187.2M355.0 176.2V183.4M355.5 177.2V182.7M356.0 177.1V182.1M356.5 174.4V183.7M357.0 177.9V181.8M357.5 177.5V181.7M358.0 178.1V181.1M358.5 178.0V181.6M359.0 177.9V181.6M359.5 178.3V181.0M360.0 177.4V181.5M360.5 176.1V182.4M361.0 173.8V184.4M361.5 174.6V185.1M362.0 176.1V183.2M362.5 175.9V182.6M363.0 176.0V182.6M363.5 176.2V183.6M364.0 172.6V187.9M364.5 170.9V187.0M365.0 175.7V183.5M365.5 174.5V184.4M366.0 176.2V184.0M366.5 176.1V184.4M367.0 176.5V182.4M367.5 175.7V182.4M368.0 176.8V182.8M368.5 172.4V186.0M369.0 174.6V184.2M369.5 175.6V183.7M370.0 177.1V182.6M370.5 177.1V181.8M371.0 174.3V183.8M371.5 177.0V181.9M372.0 177.9V181.0M372.5 177.6V181.2M373.0 177.9V180.9M373.5 178.1V181.8M374.0 177.6V181.6M374.5 177.9V181.2M375.0 178.1V181.1M375.5 178.0V181.4M376.0 176.6V182.7M376.5 176.3V182.0M377.0 177.6V182.4M377.5 176.7V183.0M378.0 176.8V183.7M378.5 176.7V181.8M379.0 176.6V182.2M379.5 176.7V182.7M380.0 175.6V183.9M380.5 175.8V183.9M381.0 175.1V186.2M381.5 174.7V183.8M382.0 176.6V182.6M382.5 175.2V182.8M383.0 176.3V184.1M383.5 176.9V182.3M384.0 177.3V181.8M384.5 176.1V183.3M385.0 177.6V182.0M385.5 177.5V181.5M386.0 177.6V181.1M386.5 175.0V184.7M387.0 176.3V182.3M387.5 177.2V181.8M388.0 177.6V181.8M388.5 176.6V183.0M389.0 174.8V183.3M389.5 176.9V181.8M390.0 175.1V183.6M390.5 176.5V183.4M391.0 175.5V184.1M391.5 174.3V184.3M392.0 175.7V183.5M392.5 176.2V182.8M393.0 178.2V181.1M393.5 177.1V182.1M394.0 177.8V181.3M394.5 177.6V181.6M395.0 178.0V181.9M395.5 177.9V181.3M396.0 176.9V182.4M396.5 177.7V181.5M397.0 177.7V181.3M397.5 174.6V185.8M398.0 177.8V182.1M398.5 176.8V183.4M399.0 177.9V182.0M399.5 176.2V183.4M400.0 177.1V182.5M400.5 172.9V185.9M401.0 175.1V185.6M401.5 177.6V181.3M402.0 177.8V182.0M402.5 176.5V183.7M403.0 177.7V181.2M403.5 177.9V180.7M404.0 177.2V181.2M404.5 177.6V181.4M405.0 177.5V182.3M405.5 177.6V182.1M406.0 176.1V182.9M406.5 176.2V182.4M407.0 177.9V182.0M407.5 176.7V182.3M408.0 176.6V182.5M408.5 177.5V181.6M409.0 175.0V183.7M409.5 176.2V182.7M410.0 176.1V182.3M410.5 176.2V183.4M411.0 176.9V182.0M411.5 175.9V183.6M412.0 176.0V182.8M412.5 177.8V181.9M413.0 177.1V181.6M413.5 176.7V182.9M414.0 178.2V181.6M414.5 178.0V181.2M415.0 178.2V181.0M415.5 178.2V181.1M416.0 177.3V181.8M416.5 176.9V181.8M417.0 178.0V181.2M417.5 177.8V182.2M418.0 177.8V181.4M418.5 173.9V184.2M419.0 172.6V186.4M419.5 172.3V185.1M420.0 172.6V187.1M420.5 177.1V181.7M421.0 175.0V184.0M421.5 177.2V182.5M422.0 176.5V182.4M422.5 176.2V182.3M423.0 177.0V182.3M423.5 176.4V182.3M424.0 176.2V183.1M424.5 175.9V183.2M425.0 177.3V182.9M425.5 175.7V183.3M426.0 174.1V185.7M426.5 175.2V183.2M427.0 173.3V186.9M427.5 174.0V184.6M428.0 176.7V182.7M428.5 174.2V184.0M429.0 170.3V188.0M429.5 174.5V184.5M430.0 165.8V189.4M430.5 175.4V183.7M431.0 172.1V186.9M431.5 174.9V183.4M432.0 175.1V183.3M432.5 177.1V182.8M433.0 173.8V186.6M433.5 176.1V183.7M434.0 167.9V191.1M434.5 173.7V184.9M435.0 176.2V182.4M435.5 175.7V183.8M436.0 174.5V184.2M436.5 177.0V182.5M437.0 176.3V182.9M437.5 176.8V181.9M438.0 177.9V181.7M438.5 177.7V181.2M439.0 177.8V180.8M439.5 177.8V181.4M440.0 176.6V182.0M440.5 177.1V181.9M441.0 177.2V182.0M441.5 176.9V181.7M442.0 177.7V181.6M442.5 171.5V187.4M443.0 176.7V182.8M443.5 176.7V182.4M444.0 177.0V182.3M444.5 177.1V182.1M445.0 176.8V182.1M445.5 175.7V183.9M446.0 175.8V183.7M446.5 172.2V186.2M447.0 177.4V182.4M447.5 175.2V183.9M448.0 176.9V182.1M448.5 177.1V182.0M449.0 177.8V181.2M449.5 177.7V181.5M450.0 177.7V181.7M450.5 178.2V181.1M451.0 178.0V180.8M451.5 177.9V181.7M452.0 177.5V181.6M452.5 177.7V181.4M453.0 177.3V182.9M453.5 177.5V181.7M454.0 176.3V183.6M454.5 173.3V184.6M455.0 175.6V182.4M455.5 176.2V183.3M456.0 167.9V187.7M456.5 175.4V182.9M457.0 174.1V184.0M457.5 176.9V183.2M458.0 176.2V183.1M458.5 175.9V184.7M459.0 176.6V183.2M459.5 174.8V183.9M460.0 176.2V182.3M460.5 176.1V183.0M461.0 177.3V182.3M461.5 176.3V182.2M462.0 175.2V183.1M462.5 175.9V183.0M463.0 177.6V181.9M463.5 176.9V182.7M464.0 176.8V182.2M464.5 177.5V181.4M465.0 178.1V180.9M465.5 178.5V180.8M466.0 178.2V181.0M466.5 175.1V183.7M467.0 177.6V182.2M467.5 177.6V182.2M468.0 177.1V181.6M468.5 176.5V182.9M469.0 175.3V183.5M469.5 176.6V182.9M470.0 176.5V183.2M470.5 176.4V182.9M471.0 176.0V183.6M471.5 173.7V184.0M472.0 175.3V183.9M472.5 175.2V183.6M473.0 171.6V188.6M473.5 175.4V183.6M474.0 174.0V184.5M474.5 174.7V185.5M475.0 176.5V183.9M475.5 176.5V182.8M476.0 177.8V181.8M476.5 177.9V181.4M477.0 177.3V182.3M477.5 177.8V181.5M478.0 178.4V181.1M478.5 178.2V180.8M479.0 178.3V181.1M479.5 175.5V183.2M480.0 178.6V180.9M480.5 175.5V182.8M481.0 177.6V181.8M481.5 174.0V184.9M482.0 177.8V181.7M482.5 177.0V181.9M483.0 177.8V181.2M483.5 176.5V182.7M484.0 176.6V182.5M484.5 177.2V181.5M485.0 177.6V181.7M485.5 173.9V185.2M486.0 176.5V182.3M486.5 176.4V182.9M487.0 177.6V181.4M487.5 177.4V181.5M488.0 177.7V181.4M488.5 177.3V181.7M489.0 178.1V180.7M489.5 178.2V181.2M490.0 178.2V181.3M490.5 177.7V181.2M491.0 177.7V181.8M491.5 174.9V184.8M492.0 176.7V182.1M492.5 176.9V182.9M493.0 176.3V182.9M493.5 176.6V183.3M494.0 176.5V182.4M494.5 176.3V182.4M495.0 177.4V182.0M495.5 176.2V183.8M496.0 177.2V182.0M496.5 178.0V181.6M497.0 177.8V181.7M497.5 177.3V182.3M498.0 177.8V181.4M498.5 178.2V180.9M499.0 177.5V181.1M499.5 178.5V180.9M500.0 177.8V181.4M500.5 177.8V181.1M501.0 178.4V180.8M501.5 178.1V181.8M502.0 178.3V180.9M502.5 177.4V181.2M503.0 177.9V181.3M503.5 177.8V182.2M504.0 177.9V181.4M504.5 176.8V182.0M505.0 177.2V182.7M505.5 177.0V182.9M506.0 175.4V183.9M506.5 177.0V182.6M507.0 174.5V185.1M507.5 176.0V182.9M508.0 176.1V182.1M508.5 174.0V186.4M509.0 176.3V183.5M509.5 176.4V181.8M510.0 176.6V181.8M510.5 176.0V182.7M511.0 177.5V181.9M511.5 174.1V185.1M512.0 177.1V182.5M512.5 176.7V182.0M513.0 177.5V181.5M513.5 177.2V181.6M514.0 178.4V180.9M514.5 178.4V180.7M515.0 176.2V182.9M515.5 178.4V180.9M516.0 178.4V181.1M516.5 177.5V181.6M517.0 177.2V182.4M517.5 177.4V181.7M518.0 177.3V181.8M518.5 176.9V181.6M519.0 176.2V182.9M519.5 175.0V183.7M520.0 175.4V183.8M520.5 173.8V186.2M521.0 176.3V182.5M521.5 175.0V184.8M522.0 174.3V186.5M522.5 177.0V182.0M523.0 174.9V184.7M523.5 175.7V182.6M524.0 174.9V183.9M524.5 173.1V184.7M525.0 177.3V181.2M525.5 176.9V182.6M526.0 178.4V180.8M526.5 178.2V181.0M527.0 177.6V181.6M527.5 177.2V182.1M528.0 177.7V181.4M528.5 177.8V181.4M529.0 176.5V182.7M529.5 176.3V182.1M530.0 176.9V182.5M530.5 176.8V182.2M531.0 177.5V181.7M531.5 175.9V184.0M532.0 176.3V183.1M532.5 173.2V184.9M533.0 176.0V183.0M533.5 176.2V183.2M534.0 176.7V182.5M534.5 177.2V181.7M535.0 177.4V181.5M535.5 177.6V181.3M536.0 178.0V181.4M536.5 174.8V183.3M537.0 178.2V180.9M537.5 175.5V185.3M538.0 178.2V181.1M538.5 176.9V182.2M539.0 176.2V183.3M539.5 175.7V182.5M540.0 176.2V183.5M540.5 175.1V182.8M541.0 170.6V188.2M541.5 175.8V183.9M542.0 174.8V185.3M542.5 176.3V182.6M543.0 168.6V187.1M543.5 175.7V183.9M544.0 176.7V182.5M544.5 176.5V182.0M545.0 176.7V182.7M545.5 175.3V185.7M546.0 177.8V181.7M546.5 177.7V181.4M547.0 177.7V181.5M547.5 177.8V181.5M548.0 177.7V181.4M548.5 177.9V181.1M549.0 177.9V180.9M549.5 177.8V181.1M550.0 174.9V185.4M550.5 178.2V181.6M551.0 177.9V181.2M551.5 177.5V182.7M552.0 176.2V182.4M552.5 177.6V181.0M553.0 176.7V183.8M553.5 175.7V183.4M554.0 175.8V183.8M554.5 175.8V184.0M555.0 175.9V182.6M555.5 174.5V187.2M556.0 175.8V183.5M556.5 177.4V182.0M557.0 176.1V182.4M557.5 176.4V182.2M558.0 177.5V181.9M558.5 177.2V181.9M559.0 178.5V180.6M559.5 178.1V180.8M560.0 178.3V180.9M560.5 177.9V181.4M561.0 178.4V180.6M561.5 177.9V181.0M562.0 177.9V181.5M562.5 177.9V181.3M563.0 178.0V181.2M563.5 177.6V182.0M564.0 177.0V182.0M564.5 177.4V181.6M565.0 177.3V182.3M565.5 177.4V182.2M566.0 176.7V183.0M566.5 177.4V181.9M567.0 177.2V182.3M567.5 176.1V184.4M568.0 177.4V182.1M568.5 176.9V182.0M569.0 177.0V183.0M569.5 178.0V181.3M570.0 177.2V181.7M570.5 173.9V185.5M571.0 177.2V181.9M571.5 177.9V181.6M572.0 177.7V181.2M572.5 177.8V181.6M573.0 177.7V181.6M573.5 177.8V181.4M574.0 175.8V183.9M574.5 177.1V182.2M575.0 175.0V182.8M575.5 176.9V182.8M576.0 175.2V183.9M576.5 173.0V184.7M577.0 175.2V185.3M577.5 175.4V183.5M578.0 174.7V185.1M578.5 173.0V187.1M579.0 172.5V186.3M579.5 166.5V190.5M580.0 172.7V186.3M580.5 172.6V185.0M581.0 174.6V183.3M581.5 175.5V183.3M582.0 174.0V185.6M582.5 177.3V182.0M583.0 178.1V181.0M583.5 177.9V181.7M584.0 177.5V181.8M584.5 177.6V181.2M585.0 177.8V181.8M585.5 176.8V182.1M586.0 176.2V182.2M586.5 176.9V182.3M587.0 176.2V182.8M587.5 176.3V183.4M588.0 177.0V183.3M588.5 175.7V183.8M589.0 172.4V186.9M589.5 174.7V185.3M590.0 174.2V183.5M590.5 174.9V183.7M591.0 170.0V188.0M591.5 173.7V185.8M592.0 172.9V186.4M592.5 172.4V186.8M593.0 172.4V187.2M593.5 172.2V185.3M594.0 174.8V184.2M594.5 168.6V191.3M595.0 174.0V185.4M595.5 174.2V185.1M596.0 175.4V183.4M596.5 175.5V182.8M597.0 173.1V186.3M597.5 176.3V182.5M598.0 177.3V182.7M598.5 174.4V184.6M599.0 176.1V183.0M599.5 174.7V183.9M600.0 176.1V184.4M600.5 174.0V183.7M601.0 174.7V183.9M601.5 175.3V185.5M602.0 176.8V182.7M602.5 175.6V183.7M603.0 175.9V182.4M603.5 174.9V184.9M604.0 172.5V186.4M604.5 174.0V185.7M605.0 162.8V196.3M605.5 173.5V183.9M606.0 169.8V187.6M606.5 174.4V184.6M607.0 175.0V183.9M607.5 174.0V185.5M608.0 174.5V183.6M608.5 171.7V186.8M609.0 177.0V182.2M609.5 175.2V185.5M610.0 176.1V182.9M610.5 177.6V182.1M611.0 177.9V181.4M611.5 177.7V181.3M612.0 178.2V181.2M612.5 177.2V181.4M613.0 176.7V182.6M613.5 177.2V182.4M614.0 177.0V182.2M614.5 176.9V182.4M615.0 176.3V183.2M615.5 173.8V183.7M616.0 173.6V184.6M616.5 173.2V185.6M617.0 175.4V184.5M617.5 173.3V184.7M618.0 169.2V189.4M618.5 173.8V187.4M619.0 172.1V187.4M619.5 168.4V189.0M620.0 168.1V191.1M620.5 171.4V189.5M621.0 174.7V184.2M621.5 168.2V189.6M622.0 167.6V193.5M622.5 171.9V187.2M623.0 176.6V183.3M623.5 176.8V183.0M624.0 174.3V186.0M624.5 175.1V182.9M625.0 166.5V192.1M625.5 177.0V182.3M626.0 177.4V181.4M626.5 175.0V185.6M627.0 174.1V183.5M627.5 176.4V183.1M628.0 177.3V182.6M628.5 177.4V182.8M629.0 175.9V183.8M629.5 177.2V182.6M630.0 168.6V191.1M630.5 176.9V181.9M631.0 172.0V187.7M631.5 176.3V183.3M632.0 174.6V184.2M632.5 169.6V190.2M633.0 177.3V181.8M633.5 177.0V182.4M634.0 170.9V186.0M634.5 177.0V182.7M635.0 176.4V183.0M635.5 175.7V184.4M636.0 176.0V182.3M636.5 175.9V183.0M637.0 176.5V183.1M637.5 176.2V183.3M638.0 175.5V183.4M638.5 176.2V183.1M639.0 171.1V186.8M639.5 174.5V183.8M640.0 175.8V184.9M640.5 173.9V183.6M641.0 165.4V199.3M641.5 173.7V186.0M642.0 171.9V185.2M642.5 173.2V184.3M643.0 174.5V184.5M643.5 174.1V185.6M644.0 176.3V181.9M644.5 176.3V182.5M645.0 177.9V181.5M645.5 173.1V186.6M646.0 176.8V182.3M646.5 177.3V181.3M647.0 175.6V182.3M647.5 174.3V185.5M648.0 178.2V181.0M648.5 177.5V181.4M649.0 178.4V181.2M649.5 175.3V183.3M650.0 176.3V182.9M650.5 173.7V184.7M651.0 177.2V182.2M651.5 177.0V181.9M652.0 176.1V183.3M652.5 174.3V185.8M653.0 174.3V185.1M653.5 176.4V183.0M654.0 171.1V187.1M654.5 175.8V182.7M655.0 172.1V186.1M655.5 172.3V186.5M656.0 172.8V186.3M656.5 174.2V184.7M657.0 174.6V186.1M657.5 175.9V184.0M658.0 177.6V182.6M658.5 176.4V183.2M659.0 176.0V183.3M659.5 176.8V181.9M660.0 175.5V183.2M660.5 178.5V180.5M661.0 178.6V180.8M661.5 178.7V180.8M662.0 178.3V181.5M662.5 178.0V181.7M663.0 176.2V183.3M663.5 175.8V183.8M664.0 175.6V182.9M664.5 174.7V184.2M665.0 167.3V190.7M665.5 177.1V181.7M666.0 174.7V183.4M666.5 175.1V183.1M667.0 171.9V185.4M667.5 161.9V198.7M668.0 175.5V184.2M668.5 176.6V183.4M669.0 170.7V193.2M669.5 172.5V185.8M670.0 176.1V183.9M670.5 175.2V183.3M671.0 176.1V183.7M671.5 176.8V182.8M672.0 176.4V183.5M672.5 177.5V182.2M673.0 178.0V181.5M673.5 174.8V185.4M674.0 173.1V188.8M674.5 176.0V182.9M675.0 174.9V183.6M675.5 171.6V186.8M676.0 176.9V183.3M676.5 175.1V183.9M677.0 174.8V183.0M677.5 173.4V185.3M678.0 174.9V185.3M678.5 175.5V182.8M679.0 175.8V183.3M679.5 174.1V185.5M680.0 176.4V182.7M680.5 175.8V183.4M681.0 176.7V183.1M681.5 177.2V182.2M682.0 173.8V183.6M682.5 177.1V181.7M683.0 177.7V181.1M683.5 177.2V182.1M684.0 177.7V181.3M684.5 178.2V181.2M685.0 177.6V181.6M685.5 177.9V181.8M686.0 177.6V181.9M686.5 177.1V181.9M687.0 174.0V186.1M687.5 175.7V183.1M688.0 175.0V184.1M688.5 175.3V183.3M689.0 176.7V183.1M689.5 175.6V184.0M690.0 175.7V182.3M690.5 173.8V185.5M691.0 176.5V182.4M691.5 176.5V182.7M692.0 175.1V184.6M692.5 177.1V181.6M693.0 172.1V187.1M693.5 177.5V182.2M694.0 176.0V182.6M694.5 177.7V181.7M695.0 177.3V182.4M695.5 177.2V181.8M696.0 177.5V181.6M696.5 175.5V183.6M697.0 178.0V181.3M697.5 177.1V181.7M698.0 177.3V181.9M698.5 177.6V181.8M699.0 176.8V182.2M699.5 177.7V181.5M700.0 174.9V184.2M700.5 177.5V182.6M701.0 174.6V184.9M701.5 176.6V182.9M702.0 176.5V184.0M702.5 175.6V183.2M703.0 176.9V182.3M703.5 175.7V182.9M704.0 176.1V182.5M704.5 176.5V183.2M705.0 171.8V187.5M705.5 176.4V181.8M706.0 176.9V181.8M706.5 176.4V182.5M707.0 177.2V181.6M707.5 177.4V181.6M708.0 177.6V182.2M708.5 177.0V182.1M709.0 175.2V184.4M709.5 177.6V181.6M710.0 175.3V183.5M710.5 174.8V184.1M711.0 176.6V182.8M711.5 176.8V182.6M712.0 174.1V184.7M712.5 175.1V182.7M713.0 174.6V183.5M713.5 174.1V184.3M714.0 173.5V184.8M714.5 174.6V184.5M715.0 173.0V185.6M715.5 175.2V183.4M716.0 168.0V191.3M716.5 172.9V187.8M717.0 174.1V186.4M717.5 176.1V183.0M718.0 175.3V184.4M718.5 165.4V190.5M719.0 174.9V186.0M719.5 175.4V183.5M720.0 175.2V186.1M720.5 175.1V183.9M721.0 176.8V181.8M721.5 175.9V182.6M722.0 175.2V182.7M722.5 177.5V181.8M723.0 176.6V182.5M723.5 177.2V182.5M724.0 175.6V184.6M724.5 176.3V183.1M725.0 173.8V186.2M725.5 173.8V184.2M726.0 174.2V185.8M726.5 174.2V184.3"/></g>
<g stroke="#8cc4fa" stroke-width="0.6"><path d="M213.0 98.0V101.4M213.5 98.0V101.7M214.0 98.1V101.1M214.5 97.9V101.3M215.0 97.5V101.4M215.5 97.7V101.5M216.0 98.1V101.5M216.5 98.1V101.0M217.0 97.7V101.2M217.5 97.0V101.9M218.0 97.5V101.3M218.5 97.6V101.4M219.0 97.0V101.7M219.5 96.7V101.9M220.0 97.2V101.5M220.5 97.2V101.6M221.0 97.0V102.0M221.5 97.5V102.1M222.0 97.9V101.9M222.5 97.0V101.5M223.0 96.8V102.0M223.5 97.1V102.2M224.0 96.8V102.3M224.5 97.7V101.1M225.0 97.2V101.5M225.5 97.7V101.4M226.0 97.3V101.9M226.5 97.8V101.8M227.0 98.1V101.3M227.5 98.1V101.5M228.0 97.9V101.5M228.5 97.1V102.3M229.0 97.2V101.9M229.5 96.5V102.8M230.0 95.9V102.6M230.5 95.7V103.7M231.0 95.8V102.9M231.5 95.6V103.5M232.0 96.7V103.4M232.5 96.9V102.6M233.0 96.6V102.7M233.5 96.4V102.5M234.0 96.6V102.7M234.5 96.8V102.3M235.0 97.0V102.7M235.5 95.9V102.8M236.0 96.6V102.8M236.5 96.1V102.5M237.0 95.9V103.4M237.5 95.1V104.5M238.0 94.8V103.4M238.5 94.9V103.7M239.0 94.8V104.7M239.5 95.4V103.7M240.0 95.9V103.3M240.5 95.2V104.4M241.0 95.9V103.5M241.5 96.2V102.4M242.0 96.3V102.9M242.5 96.0V102.7M243.0 96.8V101.9M243.5 96.9V102.1M244.0 96.4V102.8M244.5 97.4V101.9M245.0 96.7V102.2M245.5 97.3V102.6M246.0 97.2V101.6M246.5 97.4V102.2M247.0 97.4V102.0M247.5 97.1V102.1M248.0 97.2V101.9M248.5 97.9V101.1M249.0 97.5V101.6M249.5 97.2V101.9M250.0 97.5V101.4M250.5 98.3V101.0M251.0 97.8V101.4M251.5 97.9V101.4M252.0 97.7V101.3M252.5 97.3V101.9M253.0 97.4V102.2M253.5 97.1V102.0M254.0 96.9V102.6M254.5 97.2V102.4M255.0 97.0V102.0M255.5 96.8V102.5M256.0 96.4V103.0M256.5 96.5V102.0M257.0 97.2V101.8M257.5 97.3V102.1M258.0 96.9V102.3M258.5 97.4V101.8M259.0 98.0V101.1M259.5 97.9V101.2M260.0 98.3V100.9M260.5 98.0V101.0M261.0 97.5V101.9M261.5 97.4V101.9M262.0 97.8V101.4M262.5 97.6V102.1M263.0 97.2V101.5M263.5 97.2V102.4M264.0 96.7V103.0M264.5 96.8V102.0M265.0 96.9V101.8M265.5 97.5V101.9M266.0 97.2V102.3M266.5 97.3V101.6M267.0 97.4V102.1M267.5 97.5V101.6M268.0 97.9V101.1M268.5 98.1V100.9M269.0 98.1V101.3M269.5 97.6V101.3M270.0 98.0V101.3M270.5 97.8V101.3M271.0 97.7V101.3M271.5 97.6V102.0M272.0 97.3V101.5M272.5 97.8V101.9M273.0 97.2V102.1M273.5 97.3V102.2M274.0 97.2V102.7M274.5 96.5V102.5M275.0 96.4V102.5M275.5 96.2V102.8M276.0 97.2V102.1M276.5 97.2V101.9M277.0 96.9V101.9M277.5 97.4V102.1M278.0 96.7V102.1M278.5 97.0V102.2M279.0 97.5V101.4M279.5 97.7V102.0M280.0 97.7V101.6M280.5 97.8V101.1M281.0 97.7V101.2M281.5 98.0V101.2M282.0 98.2V101.3M282.5 98.0V101.2M283.0 97.4V101.6M283.5 97.7V101.7M284.0 97.8V101.2M284.5 97.7V101.7M285.0 97.4V101.7M285.5 97.5V102.3M286.0 97.8V101.6M286.5 97.3V101.9M287.0 97.4V101.7M287.5 97.5V101.9M288.0 97.3V101.6M288.5 97.2V101.8M289.0 97.4V102.1M289.5 96.8V102.1M290.0 97.6V101.9M290.5 97.0V102.0M291.0 97.6V101.4M291.5 97.7V101.4M292.0 98.0V101.3M292.5 98.0V101.2M293.0 97.9V101.3M293.5 98.0V101.4M294.0 98.0V101.1M294.5 97.9V101.4M295.0 98.0V100.9M295.5 98.2V101.1M296.0 98.1V101.0M296.5 98.1V101.0M297.0 98.1V101.0M297.5 98.0V101.3M298.0 97.4V101.7M298.5 97.5V101.8M299.0 97.8V101.7M299.5 97.1V102.0M300.0 97.0V101.8M300.5 97.2V101.9M301.0 97.3V101.9M301.5 97.0V102.5M302.0 97.3V102.1M302.5 96.9V102.7M303.0 96.2V103.0M303.5 97.0V102.5M304.0 96.5V102.8M304.5 96.9V102.5M305.0 96.5V102.2M305.5 96.9V102.5M306.0 97.6V101.4M306.5 97.4V101.7M307.0 97.7V101.6M307.5 97.9V101.6M308.0 97.3V102.2M308.5 97.8V101.2M309.0 97.6V101.4M309.5 97.6V102.2M310.0 97.7V101.6M310.5 97.7V101.9M311.0 97.1V102.1M311.5 97.6V101.5M312.0 97.1V101.6M312.5 97.2V102.1M313.0 96.9V102.7M313.5 96.5V102.6M314.0 96.7V102.4M314.5 96.7V102.7M315.0 96.6V103.0M315.5 96.8V102.9M316.0 96.8V103.3M316.5 96.8V102.5M317.0 96.8V102.4M317.5 97.4V101.8M318.0 96.9V102.2M318.5 96.6V102.1M319.0 97.3V101.9M319.5 97.3V101.7M320.0 97.7V101.6M320.5 97.6V101.9M321.0 97.5V102.1M321.5 97.7V101.3M322.0 97.3V101.6M322.5 97.2V102.0M323.0 97.0V102.1M323.5 97.0V102.3M324.0 96.3V103.3M324.5 96.3V102.5M325.0 96.4V102.9M325.5 95.4V103.0M326.0 96.4V103.0M326.5 96.3V102.5M327.0 96.8V102.5M327.5 96.6V103.4M328.0 97.3V102.1M328.5 97.7V101.7M329.0 97.7V101.4M329.5 97.1V102.0M330.0 98.0V101.3M330.5 98.2V101.0M331.0 98.0V101.1M331.5 98.1V101.6M332.0 97.6V101.7M332.5 97.4V101.6M333.0 97.2V102.0M333.5 96.8V102.2M334.0 96.9V102.6M334.5 97.0V102.2M335.0 96.3V102.8M335.5 96.5V102.9M336.0 96.6V102.9M336.5 96.3V102.3M337.0 96.0V103.0M337.5 95.8V103.8M338.0 96.1V102.7M338.5 95.7V103.5M339.0 95.6V103.6M339.5 95.7V102.9M340.0 94.9V104.3M340.5 95.1V103.5M341.0 96.4V103.2M341.5 95.8V103.4M342.0 95.5V103.1M342.5 96.4V103.1M343.0 96.5V103.6M343.5 96.5V102.1M344.0 96.3V102.6M344.5 97.2V101.8M345.0 97.6V101.7M345.5 96.8V102.4M346.0 97.5V101.7M346.5 97.6V101.6M347.0 97.2V101.9M347.5 97.5V101.7M348.0 97.2V101.8M348.5 96.9V101.9M349.0 97.0V102.2M349.5 97.3V102.5M350.0 96.6V102.7M350.5 96.6V102.5M351.0 96.8V102.1M351.5 96.4V103.4M352.0 96.0V103.0M352.5 96.7V102.6M353.0 96.6V102.6M353.5 97.3V102.3M354.0 96.8V102.5M354.5 96.2V102.1M355.0 97.7V101.7M355.5 97.7V101.3M356.0 97.5V102.0M356.5 97.3V102.5M357.0 97.9V101.7M357.5 97.8V101.2M358.0 98.1V101.0M358.5 97.8V101.6M359.0 97.8V101.8M359.5 98.0V101.5M360.0 97.5V101.9M360.5 97.7V101.2M361.0 97.1V102.1M361.5 97.2V101.9M362.0 97.4V102.5M362.5 97.0V102.1M363.0 96.6V102.6M363.5 96.3V102.4M364.0 96.0V102.7M364.5 96.5V102.9M365.0 97.2V102.3M365.5 96.5V103.2M366.0 95.6V103.6M366.5 96.5V102.8M367.0 96.0V103.3M367.5 97.2V102.2M368.0 96.5V102.7M368.5 97.2V102.1M369.0 96.9V102.9M369.5 97.1V102.5M370.0 97.2V101.9M370.5 97.0V101.9M371.0 97.1V101.8M371.5 97.6V102.0M372.0 97.6V101.3M372.5 97.8V101.7M373.0 97.6V101.5M373.5 98.1V100.9M374.0 98.1V101.4M374.5 98.1V101.0M375.0 97.8V101.5M375.5 97.7V101.2M376.0 97.3V101.9M376.5 97.1V101.6M377.0 96.9V101.8M377.5 96.4V102.1M378.0 96.8V102.7M378.5 96.5V102.7M379.0 96.7V103.3M379.5 95.8V102.5M380.0 95.8V103.0M380.5 96.4V102.7M381.0 95.9V103.3M381.5 96.2V102.9M382.0 95.8V102.7M382.5 96.5V102.6M383.0 96.4V102.9M383.5 97.1V102.6M384.0 97.1V101.7M384.5 97.5V102.0M385.0 97.5V101.7M385.5 97.7V101.4M386.0 97.3V101.4M386.5 97.8V101.7M387.0 97.0V101.6M387.5 97.5V102.0M388.0 97.6V101.7M388.5 96.9V102.1M389.0 96.9V101.9M389.5 96.8V102.7M390.0 96.8V102.5M390.5 97.0V102.9M391.0 97.5V102.3M391.5 97.5V102.0M392.0 97.1V102.0M392.5 97.4V101.6M393.0 97.3V102.1M393.5 97.2V102.2M394.0 97.1V101.6M394.5 97.1V102.0M395.0 97.8V101.0M395.5 97.4V101.9M396.0 97.6V101.4M396.5 97.6V102.1M397.0 97.4V101.8M397.5 96.5V102.0M398.0 96.8V102.6M398.5 96.6V102.2M399.0 97.3V101.6M399.5 96.6V102.3M400.0 96.9V102.2M400.5 97.6V101.7M401.0 97.4V102.0M401.5 97.3V101.3M402.0 97.6V101.7M402.5 97.9V101.1M403.0 97.8V101.1M403.5 97.9V101.3M404.0 98.0V101.1M404.5 96.9V102.0M405.0 97.7V101.8M405.5 97.4V101.8M406.0 97.8V101.5M406.5 97.0V101.9M407.0 96.6V102.7M407.5 96.9V102.3M408.0 96.9V102.4M408.5 97.3V102.3M409.0 96.4V102.9M409.5 96.8V102.5M410.0 97.1V102.2M410.5 96.5V102.6M411.0 97.5V101.9M411.5 96.7V102.4M412.0 96.9V102.2M412.5 97.8V101.9M413.0 97.3V102.3M413.5 97.9V101.6M414.0 97.8V101.7M414.5 97.9V101.3M415.0 97.5V101.4M415.5 98.0V101.4M416.0 97.8V101.4M416.5 97.8V101.4M417.0 97.5V101.9M417.5 97.8V101.3M418.0 97.5V102.0M418.5 97.0V102.6M419.0 96.8V102.9M419.5 96.7V102.5M420.0 96.2V103.2M420.5 97.5V102.0M421.0 96.9V102.4M421.5 97.4V101.5M422.0 97.2V101.8M422.5 96.4V102.7M423.0 96.2V102.2M423.5 96.7V103.0M424.0 96.4V103.4M424.5 96.8V103.0M425.0 96.3V102.7M425.5 96.4V102.9M426.0 95.0V103.4M426.5 95.5V103.3M427.0 96.0V103.9M427.5 95.0V104.2M428.0 95.6V104.8M428.5 94.3V104.9M429.0 95.9V104.2M429.5 94.4V104.3M430.0 95.2V104.4M430.5 95.4V104.0M431.0 94.5V104.5M431.5 94.5V104.6M432.0 95.4V103.8M432.5 94.6V104.1M433.0 96.2V103.4M433.5 96.2V103.1M434.0 95.8V103.8M434.5 95.9V103.0M435.0 95.6V103.4M435.5 95.6V102.9M436.0 96.6V103.3M436.5 96.7V102.3M437.0 96.7V101.9M437.5 97.4V102.5M438.0 97.5V101.3M438.5 97.5V102.1M439.0 97.6V101.9M439.5 97.9V101.4M440.0 98.0V101.2M440.5 97.5V101.6M441.0 97.5V101.6M441.5 96.7V102.2M442.0 97.4V101.5M442.5 97.4V102.2M443.0 97.4V102.1M443.5 97.1V102.1M444.0 97.4V101.9M444.5 96.9V102.4M445.0 97.2V102.4M445.5 97.0V102.3M446.0 96.7V102.4M446.5 96.9V102.7M447.0 96.5V102.1M447.5 97.5V101.4M448.0 97.1V102.1M448.5 97.8V101.5M449.0 97.7V101.6M449.5 97.9V101.5M450.0 97.5V101.2M450.5 98.2V100.9M451.0 97.9V101.0M451.5 97.9V101.6M452.0 97.7V101.9M452.5 97.1V102.4M453.0 97.5V101.9M453.5 97.2V102.1M454.0 97.4V102.1M454.5 97.0V101.7M455.0 97.1V102.5M455.5 96.6V102.2M456.0 96.6V102.7M456.5 96.1V103.6M457.0 96.0V102.9M457.5 96.6V103.2M458.0 96.3V102.7M458.5 96.3V103.8M459.0 96.7V102.7M459.5 96.1V102.8M460.0 96.7V102.3M460.5 96.8V102.7M461.0 96.9V102.2M461.5 96.8V102.1M462.0 96.5V102.1M462.5 97.4V102.0M463.0 96.8V102.6M463.5 97.7V102.1M464.0 97.8V101.5M464.5 97.5V101.9M465.0 98.1V100.8M465.5 98.2V101.0M466.0 97.6V101.6M466.5 97.8V101.8M467.0 97.6V101.4M467.5 97.5V102.0M468.0 97.4V101.7M468.5 97.3V102.3M469.0 97.0V101.8M469.5 96.8V102.3M470.0 96.7V102.8M470.5 96.2V102.9M471.0 95.7V103.6M471.5 96.1V102.7M472.0 95.7V103.7M472.5 95.4V103.9M473.0 95.8V102.9M473.5 95.8V102.6M474.0 96.6V102.9M474.5 96.9V102.5M475.0 97.3V102.4M475.5 96.5V102.1M476.0 97.1V101.8M476.5 97.4V101.8M477.0 97.8V101.6M477.5 97.4V102.1M478.0 98.1V101.1M478.5 97.8V101.2M479.0 97.4V101.6M479.5 98.2V100.7M480.0 97.9V101.4M480.5 97.5V101.6M481.0 97.5V101.8M481.5 98.0V101.2M482.0 98.0V101.4M482.5 97.6V101.4M483.0 97.4V101.9M483.5 97.4V101.7M484.0 97.3V102.3M484.5 97.1V102.1M485.0 97.1V102.0M485.5 97.2V101.6M486.0 97.0V102.2M486.5 97.5V101.9M487.0 97.0V102.0M487.5 97.3V101.6M488.0 97.9V101.3M488.5 97.8V101.3M489.0 97.7V101.5M489.5 98.0V100.9M490.0 97.8V101.4M490.5 97.1V102.0M491.0 98.0V101.5M491.5 97.6V102.1M492.0 97.3V102.0M492.5 97.0V102.0M493.0 97.1V102.5M493.5 97.0V102.0M494.0 97.0V102.1M494.5 96.6V102.5M495.0 97.2V101.9M495.5 97.1V102.4M496.0 97.1V102.1M496.5 97.1V102.1M497.0 97.3V101.7M497.5 97.8V101.5M498.0 98.2V101.4M498.5 97.6V101.5M499.0 97.8V100.9M499.5 97.3V101.8M500.0 97.4V101.8M500.5 97.1V102.2M501.0 96.7V103.3M501.5 96.2V103.3M502.0 95.7V102.9M502.5 95.0V104.3M503.0 95.8V103.4M503.5 95.4V105.0M504.0 95.7V103.2M504.5 94.8V103.7M505.0 95.8V103.0M505.5 95.1V104.1M506.0 95.8V103.8M506.5 96.6V102.8M507.0 95.8V102.5M507.5 95.9V102.8M508.0 97.1V102.7M508.5 96.3V103.0M509.0 97.1V102.6M509.5 96.9V102.1M510.0 97.2V102.1M510.5 97.2V102.7M511.0 97.8V101.8M511.5 97.1V101.7M512.0 97.6V101.6M512.5 97.4V102.2M513.0 97.5V101.9M513.5 97.8V101.0M514.0 97.9V101.5M514.5 97.9V101.4M515.0 98.1V101.1M515.5 98.0V101.4M516.0 98.3V100.9M516.5 97.9V101.4M517.0 97.5V101.4M517.5 97.1V101.6M518.0 96.8V102.9M518.5 96.3V103.0M519.0 96.3V102.8M519.5 96.2V103.0M520.0 96.4V102.5M520.5 96.5V103.3M521.0 95.7V103.7M521.5 95.5V103.2M522.0 95.6V103.5M522.5 96.5V102.8M523.0 96.6V102.9M523.5 96.2V102.3M524.0 96.2V103.1M524.5 96.9V102.2M525.0 97.6V101.5M525.5 97.6V101.8M526.0 97.8V101.6M526.5 98.3V101.0M527.0 98.0V101.0M527.5 97.4V101.8M528.0 97.6V101.5M528.5 97.5V101.9M529.0 97.6V101.8M529.5 96.9V101.8M530.0 97.1V102.0M530.5 96.5V102.5M531.0 97.2V102.0M531.5 96.6V102.6M532.0 96.9V102.5M532.5 96.1V102.9M533.0 97.4V102.2M533.5 97.2V102.1M534.0 97.5V101.6M534.5 97.6V101.8M535.0 97.2V102.1M535.5 97.6V102.0M536.0 97.8V101.0M536.5 98.0V101.1M537.0 98.2V101.1M537.5 97.9V101.1M538.0 97.8V101.5M538.5 97.6V101.9M539.0 97.0V102.1M539.5 96.4V102.6M540.0 96.6V102.5M540.5 97.1V102.0M541.0 96.3V102.5M541.5 96.0V102.8M542.0 96.1V103.0M542.5 95.6V103.4M543.0 96.6V103.2M543.5 96.4V103.1M544.0 96.7V102.3M544.5 97.1V102.0M545.0 97.0V102.0M545.5 97.3V101.7M546.0 97.6V101.8M546.5 98.1V101.1M547.0 97.8V101.5M547.5 98.1V100.8M548.0 98.2V101.3M548.5 97.9V101.1M549.0 98.2V101.1M549.5 98.1V101.5M550.0 97.8V101.7M550.5 97.5V101.4M551.0 97.6V101.6M551.5 97.6V102.2M552.0 97.1V102.3M552.5 96.6V102.6M553.0 96.7V101.8M553.5 96.8V102.7M554.0 96.8V101.8M554.5 96.6V102.5M555.0 96.7V102.7M555.5 97.3V101.9M556.0 97.1V102.1M556.5 97.0V101.9M557.0 96.9V101.6M557.5 97.6V101.7M558.0 97.6V101.7M558.5 97.4V101.6M559.0 97.8V101.3M559.5 97.8V101.3M560.0 98.1V101.0M560.5 98.2V101.2M561.0 98.1V101.0M561.5 97.8V101.2M562.0 97.5V101.4M562.5 97.7V101.6M563.0 97.1V101.6M563.5 97.7V101.5M564.0 97.9V101.1M564.5 97.5V101.8M565.0 97.1V101.7M565.5 96.7V101.9M566.0 97.2V102.0M566.5 97.6V102.1M567.0 97.0V102.0M567.5 97.5V102.0M568.0 97.3V102.2M568.5 97.1V101.8M569.0 96.9V101.9M569.5 97.0V101.6M570.0 97.6V101.7M570.5 97.7V101.8M571.0 97.3V101.9M571.5 96.9V102.1M572.0 97.8V101.8M572.5 97.7V101.4M573.0 97.9V101.7M573.5 96.6V102.5M574.0 97.5V102.1M574.5 97.4V101.8M575.0 96.9V102.2M575.5 96.7V103.0M576.0 95.9V103.2M576.5 95.8V103.8M577.0 96.2V103.0M577.5 96.9V103.0M578.0 97.2V102.3M578.5 97.1V102.0M579.0 96.4V102.5M579.5 96.9V101.8M580.0 97.6V101.6M580.5 98.1V101.1M581.0 98.2V101.3M581.5 97.8V101.4M582.0 97.9V101.3M582.5 97.8V101.8M583.0 97.8V101.7M583.5 98.0V101.0M584.0 98.0V101.5M584.5 97.8V101.4M585.0 97.6V101.6M585.5 97.5V102.2M586.0 97.5V102.1M586.5 97.3V101.9M587.0 97.6V101.5M587.5 96.8V102.1M588.0 96.7V102.4M588.5 97.2V102.6M589.0 96.9V102.4M589.5 97.2V102.0M590.0 97.8V101.6M590.5 97.0V101.8M591.0 97.5V101.6M591.5 97.4V101.5M592.0 98.0V101.6M592.5 98.2V101.0M593.0 98.2V101.2M593.5 97.3V101.6M594.0 97.8V101.5M594.5 97.8V101.4M595.0 97.7V102.1M595.5 97.6V101.3M596.0 96.8V102.1M596.5 97.4V101.7M597.0 96.2V102.3M597.5 96.9V102.8M598.0 96.9V102.4M598.5 96.6V102.1M599.0 96.6V102.0M599.5 96.2V103.4M600.0 96.6V103.1M600.5 96.1V103.2M601.0 96.6V103.3M601.5 97.0V102.9M602.0 96.0V102.5M602.5 97.1V102.3M603.0 97.2V102.8M603.5 96.7V102.6M604.0 97.6V101.6M604.5 97.1V102.0M605.0 97.0V102.5M605.5 97.7V101.8M606.0 97.2V101.8M606.5 97.2V101.5M607.0 97.5V101.7M607.5 98.1V101.1M608.0 98.3V101.0M608.5 97.6V101.2M609.0 97.6V101.2M609.5 98.3V101.3M610.0 97.5V101.5M610.5 97.9V101.2M611.0 97.8V101.5M611.5 97.8V101.4M612.0 96.9V101.6M612.5 97.6V101.6M613.0 97.7V101.7M613.5 97.6V101.6M614.0 97.3V101.4M614.5 97.1V102.0M615.0 97.5V101.9M615.5 97.2V102.3M616.0 96.6V102.5M616.5 96.9V102.5M617.0 97.4V102.0M617.5 97.0V102.1M618.0 97.3V102.1M618.5 97.9V101.6M619.0 97.5V101.6M619.5 97.3V101.9M620.0 97.4V101.8M620.5 97.5V101.4M621.0 97.8V101.3M621.5 97.4V101.8M622.0 97.6V101.8M622.5 97.9V100.9M623.0 98.0V101.0M623.5 97.9V100.9M624.0 98.2V101.1M624.5 97.8V101.5M625.0 98.0V101.7M625.5 97.7V101.8M626.0 97.2V102.2M626.5 97.3V102.0M627.0 96.8V102.3M627.5 96.7V102.4M628.0 96.8V102.3M628.5 96.6V102.6M629.0 97.0V102.2M629.5 96.4V102.6M630.0 96.6V103.3M630.5 96.4V102.6M631.0 96.5V102.6M631.5 97.1V102.4M632.0 96.9V102.5M632.5 96.7V102.6M633.0 96.2V102.3M633.5 97.1V102.2M634.0 96.6V102.1M634.5 97.3V102.5M635.0 97.4V102.0M635.5 97.3V101.9M636.0 97.7V101.7M636.5 97.8V101.5M637.0 97.9V101.1M637.5 97.8V101.7M638.0 98.1V101.1M638.5 97.8V101.2M639.0 97.4V101.4M639.5 97.5V101.9M640.0 97.1V102.1M640.5 97.1V102.3M641.0 96.9V102.2M641.5 97.4V102.1M642.0 96.6V102.5M642.5 96.6V102.9M643.0 96.8V102.2M643.5 96.9V101.7M644.0 97.4V102.4M644.5 97.4V101.4M645.0 97.0V101.7M645.5 98.0V101.6M646.0 97.8V101.3M646.5 97.7V101.2M647.0 97.8V101.6M647.5 97.6V101.3M648.0 98.1V101.0M648.5 98.0V101.3M649.0 98.0V101.5M649.5 97.2V102.0M650.0 97.8V101.8M650.5 97.2V102.5M651.0 96.8V102.4M651.5 96.2V102.8M652.0 97.0V102.4M652.5 96.7V103.1M653.0 96.1V102.6M653.5 96.1V103.4M654.0 95.6V103.5M654.5 95.7V103.6M655.0 95.1V103.6M655.5 95.9V102.6M656.0 96.2V103.1M656.5 96.2V102.6M657.0 96.8V102.5M657.5 96.7V102.7M658.0 97.2V101.9M658.5 97.4V101.7M659.0 97.5V101.9M659.5 97.5V101.5M660.0 98.1V101.2M660.5 97.9V101.1M661.0 98.2V101.0M661.5 97.7V101.1M662.0 96.8V101.8M662.5 96.2V102.3M663.0 97.1V102.2M663.5 96.1V102.7M664.0 96.4V103.2M664.5 96.7V102.7M665.0 96.1V103.2M665.5 95.9V103.5M666.0 96.1V103.4M666.5 95.8V103.6M667.0 95.5V104.5M667.5 95.4V104.1M668.0 95.3V103.7M668.5 95.9V103.3M669.0 95.8V104.1M669.5 95.6V103.2M670.0 95.3V103.4M670.5 95.8V103.7M671.0 96.2V103.1M671.5 96.5V103.1M672.0 96.3V102.9M672.5 96.8V102.1M673.0 96.5V102.2M673.5 97.4V101.7M674.0 97.2V101.8M674.5 96.8V102.6M675.0 96.6V102.6M675.5 96.2V102.7M676.0 96.4V103.2M676.5 96.7V103.5M677.0 96.0V103.4M677.5 95.3V103.3M678.0 95.5V103.2M678.5 96.5V103.0M679.0 95.8V103.5M679.5 95.9V102.8M680.0 96.5V102.2M680.5 97.1V102.9M681.0 96.7V102.2M681.5 97.4V102.3M682.0 96.4V102.3M682.5 97.5V102.0M683.0 96.8V102.3M683.5 97.8V101.4M684.0 97.3V101.9M684.5 98.4V101.1M685.0 97.7V101.5M685.5 97.6V101.4M686.0 97.3V102.0M686.5 97.6V101.9M687.0 96.8V102.6M687.5 96.4V102.1M688.0 97.1V101.9M688.5 97.0V102.9M689.0 96.7V102.6M689.5 96.8V102.5M690.0 96.5V102.8M690.5 96.1V103.3M691.0 96.2V102.6M691.5 96.4V102.6M692.0 96.9V102.9M692.5 97.0V102.0M693.0 96.6V102.1M693.5 97.3V102.2M694.0 96.7V102.1M694.5 97.5V101.6M695.0 97.8V101.6M695.5 98.1V101.5M696.0 97.7V101.3M696.5 97.4V101.7M697.0 98.0V101.3M697.5 97.4V102.1M698.0 96.9V102.1M698.5 97.3V101.9M699.0 97.2V102.0M699.5 97.2V101.6M700.0 97.0V102.5M700.5 96.6V102.3M701.0 96.9V102.6M701.5 96.3V103.0M702.0 95.9V103.0M702.5 96.2V102.9M703.0 95.8V103.0M703.5 96.2V102.5M704.0 96.7V102.7M704.5 96.5V102.2M705.0 97.2V102.1M705.5 97.2V102.0M706.0 97.6V101.5M706.5 97.6V101.6M707.0 97.5V101.6M707.5 97.7V101.2M708.0 96.8V101.9M708.5 97.6V101.6M709.0 96.9V102.2M709.5 97.2V102.2M710.0 96.8V102.5M710.5 96.5V102.7M711.0 96.2V103.2M711.5 96.5V102.9M712.0 96.2V103.0M712.5 96.3V103.6M713.0 96.8V103.0M713.5 96.1V102.9M714.0 95.7V103.0M714.5 96.3V103.6M715.0 96.3V103.4M715.5 95.9V103.1M716.0 95.8V103.5M716.5 95.8V104.1M717.0 95.4V102.9M717.5 96.0V103.3M718.0 95.7V103.7M718.5 95.9V102.7M719.0 96.1V102.5M719.5 95.8V103.6M720.0 96.5V103.2M720.5 96.6V102.8M721.0 96.7V102.3M721.5 97.2V101.7M722.0 96.8V102.0M722.5 96.6V102.3M723.0 96.7V102.0M723.5 96.8V103.0M724.0 96.3V102.8M724.5 96.9V102.8M725.0 95.4V103.8M725.5 96.2V102.9M726.0 95.7V102.7M726.5 96.5V103.4M213.0 178.5V180.6M213.5 178.6V180.5M214.0 178.4V180.9M214.5 178.4V180.7M215.0 178.7V180.6M215.5 178.2V180.8M216.0 178.6V180.8M216.5 178.1V180.8M217.0 177.9V181.2M217.5 178.0V181.1M218.0 178.5V180.9M218.5 178.0V181.2M219.0 177.8V181.3M219.5 177.9V181.0M220.0 178.0V181.4M220.5 178.2V181.2M221.0 178.2V181.0M221.5 178.0V181.1M222.0 177.8V181.4M222.5 178.2V181.0M223.0 178.5V180.8M223.5 178.0V180.9M224.0 178.1V181.1M224.5 178.5V181.0M225.0 178.5V180.6M225.5 178.1V181.1M226.0 178.4V180.8M226.5 178.2V181.2M227.0 178.6V180.7M227.5 178.4V181.0M228.0 178.3V181.2M228.5 177.7V181.5M229.0 178.4V181.0M229.5 177.9V181.0M230.0 177.9V181.6M230.5 177.9V181.7M231.0 177.3V181.3M231.5 177.1V181.7M232.0 177.2V182.2M232.5 177.3V181.5M233.0 177.9V181.1M233.5 177.6V181.5M234.0 177.8V181.7M234.5 178.0V181.1M235.0 177.9V181.5M235.5 177.6V181.8M236.0 177.6V181.5M236.5 177.1V181.8M237.0 176.6V182.5M237.5 176.9V181.8M238.0 176.9V182.5M238.5 176.1V182.2M239.0 176.3V183.2M239.5 176.7V182.9M240.0 176.6V182.4M240.5 177.1V182.5M241.0 177.3V182.5M241.5 177.4V182.3M242.0 177.2V182.0M242.5 177.8V181.7M243.0 178.1V181.4M243.5 177.7V181.4M244.0 177.7V181.6M244.5 177.6V181.6M245.0 178.1V181.0M245.5 178.1V180.9M246.0 178.3V181.0M246.5 178.2V180.9M247.0 178.3V180.7M247.5 178.3V181.0M248.0 178.5V180.7M248.5 178.2V181.1M249.0 178.5V180.8M249.5 178.3V181.2M250.0 178.0V181.1M250.5 178.6V180.8M251.0 178.5V180.8M251.5 178.5V180.8M252.0 178.3V180.9M252.5 178.2V181.0M253.0 178.2V180.7M253.5 177.9V181.1M254.0 177.9V181.4M254.5 177.9V181.3M255.0 177.9V181.6M255.5 177.8V181.4M256.0 177.9V181.3M256.5 178.1V181.3M257.0 178.1V181.3M257.5 178.5V180.8M258.0 178.3V181.1M258.5 178.2V181.1M259.0 178.5V180.6M259.5 178.5V181.0M260.0 178.6V180.5M260.5 178.6V180.6M261.0 178.2V180.7M261.5 178.0V181.0M262.0 178.2V181.2M262.5 177.8V181.2M263.0 178.2V181.3M263.5 177.9V181.3M264.0 178.3V181.0M264.5 178.1V181.2M265.0 177.8V181.3M265.5 178.0V181.7M266.0 178.1V180.8M266.5 178.4V181.0M267.0 177.9V181.1M267.5 178.4V180.6M268.0 178.3V180.7M268.5 178.4V180.8M269.0 178.7V180.5M269.5 178.6V180.6M270.0 178.6V180.6M270.5 178.3V181.2M271.0 178.2V181.2M271.5 178.2V181.0M272.0 177.9V181.3M272.5 178.4V181.1M273.0 177.9V181.2M273.5 178.2V181.1M274.0 178.3V181.0M274.5 177.4V181.5M275.0 177.9V181.3M275.5 177.7V181.2M276.0 178.3V181.2M276.5 177.7V181.2M277.0 178.3V180.8M277.5 178.0V181.0M278.0 178.1V181.2M278.5 178.1V181.1M279.0 178.2V181.1M279.5 178.1V180.8M280.0 178.3V180.8M280.5 178.4V180.7M281.0 178.4V181.0M281.5 178.8V180.6M282.0 178.4V181.1M282.5 178.7V180.6M283.0 178.1V181.1M283.5 178.4V180.7M284.0 178.1V180.9M284.5 178.2V180.8M285.0 178.0V181.2M285.5 178.3V180.9M286.0 177.9V181.2M286.5 178.5V181.0M287.0 178.2V181.2M287.5 178.3V181.0M288.0 178.0V181.2M288.5 178.0V181.3M289.0 178.3V181.3M289.5 177.9V181.5M290.0 177.8V181.2M290.5 178.1V181.0M291.0 178.0V181.5M291.5 178.6V181.0M292.0 178.3V181.0M292.5 177.9V181.1M293.0 178.5V180.9M293.5 177.9V181.3M294.0 178.5V180.7M294.5 178.4V180.7M295.0 178.6V180.8M295.5 178.3V180.6M296.0 178.5V180.8M296.5 178.4V180.8M297.0 178.3V181.1M297.5 178.5V180.6M298.0 178.6V180.7M298.5 178.1V181.2M299.0 178.5V181.0M299.5 178.3V181.1M300.0 178.0V181.4M300.5 177.7V181.2M301.0 177.9V181.6M301.5 178.0V181.4M302.0 177.9V181.5M302.5 178.0V181.2M303.0 177.8V181.0M303.5 178.2V181.2M304.0 177.5V181.2M304.5 178.1V181.1M305.0 178.4V181.2M305.5 177.6V181.3M306.0 178.1V181.2M306.5 178.1V180.9M307.0 178.3V181.0M307.5 177.8V180.9M308.0 178.2V180.9M308.5 178.6V180.7M309.0 178.4V181.0M309.5 178.3V180.9M310.0 178.5V181.0M310.5 178.4V180.7M311.0 178.2V181.0M311.5 177.9V181.1M312.0 178.1V181.3M312.5 177.7V181.6M313.0 177.6V181.3M313.5 178.2V181.2M314.0 178.1V181.2M314.5 177.3V181.5M315.0 177.6V181.1M315.5 177.3V181.7M316.0 177.7V181.5M316.5 177.6V181.6M317.0 177.8V181.3M317.5 178.0V181.4M318.0 178.4V181.0M318.5 178.2V181.1M319.0 177.9V181.4M319.5 178.3V181.1M320.0 178.1V180.9M320.5 178.4V180.7M321.0 178.4V180.9M321.5 178.4V180.8M322.0 178.3V181.0M322.5 178.0V181.1M323.0 177.8V181.4M323.5 177.5V181.7M324.0 178.0V181.7M324.5 178.0V181.4M325.0 178.0V181.6M325.5 177.2V182.1M326.0 177.3V181.7M326.5 177.5V181.3M327.0 177.7V181.4M327.5 177.9V181.1M328.0 177.4V181.4M328.5 177.7V181.2M329.0 178.1V181.4M329.5 178.1V181.0M330.0 178.8V180.5M330.5 178.7V180.5M331.0 178.1V181.1M331.5 178.1V180.7M332.0 178.3V181.1M332.5 177.8V181.1M333.0 178.5V181.1M333.5 177.8V181.1M334.0 177.8V181.2M334.5 178.0V181.2M335.0 178.0V181.5M335.5 177.9V181.1M336.0 178.0V181.5M336.5 177.8V181.6M337.0 177.6V181.7M337.5 177.3V181.9M338.0 177.5V181.8M338.5 177.2V181.8M339.0 177.3V181.5M339.5 178.1V181.1M340.0 178.0V181.4M340.5 177.9V181.2M341.0 177.9V181.3M341.5 177.8V181.0M342.0 177.6V181.4M342.5 178.1V180.9M343.0 178.2V181.0M343.5 178.4V180.7M344.0 178.6V180.7M344.5 178.3V180.9M345.0 178.2V180.7M345.5 178.1V181.0M346.0 178.0V181.1M346.5 178.2V180.8M347.0 177.7V181.4M347.5 178.1V181.0M348.0 178.0V181.2M348.5 178.0V181.1M349.0 178.3V180.9M349.5 177.9V181.0M350.0 178.2V181.4M350.5 177.6V181.6M351.0 177.9V181.1M351.5 177.6V181.4M352.0 178.1V181.2M352.5 177.9V181.2M353.0 177.9V181.7M353.5 178.1V181.2M354.0 177.9V181.3M354.5 178.1V181.4M355.0 177.6V181.5M355.5 177.8V181.0M356.0 178.3V181.0M356.5 178.1V181.0M357.0 178.4V180.9M357.5 178.1V180.9M358.0 178.1V181.1M358.5 178.1V180.8M359.0 178.4V181.0M359.5 178.5V180.7M360.0 178.1V181.1M360.5 178.3V180.6M361.0 178.5V180.8M361.5 178.1V181.2M362.0 178.0V181.5M362.5 178.1V181.1M363.0 178.2V181.4M363.5 177.9V181.5M364.0 177.4V181.4M364.5 177.8V181.4M365.0 177.6V181.8M365.5 178.0V181.5M366.0 177.7V181.6M366.5 177.5V181.8M367.0 177.6V181.6M367.5 178.1V181.2M368.0 177.7V181.3M368.5 177.4V181.4M369.0 177.5V181.5M369.5 178.1V181.5M370.0 177.6V181.2M370.5 177.7V181.0M371.0 177.9V181.0M371.5 178.6V180.7M372.0 178.2V180.9M372.5 178.1V181.0M373.0 178.2V180.9M373.5 178.6V180.5M374.0 178.8V180.5M374.5 178.7V180.7M375.0 178.5V181.0M375.5 178.2V180.7M376.0 178.3V181.4M376.5 177.9V181.0M377.0 178.0V180.9M377.5 177.8V181.1M378.0 178.1V181.1M378.5 177.6V181.3M379.0 177.8V181.3M379.5 177.4V181.8M380.0 177.8V181.8M380.5 177.5V182.3M381.0 177.2V181.7M381.5 177.5V181.7M382.0 178.0V181.3M382.5 177.4V181.9M383.0 177.4V181.6M383.5 177.6V181.4M384.0 177.9V181.3M384.5 178.2V181.0M385.0 178.5V180.7M385.5 178.3V180.9M386.0 178.6V180.9M386.5 178.3V181.0M387.0 178.4V181.0M387.5 178.0V181.1M388.0 178.2V180.9M388.5 178.3V181.1M389.0 178.0V181.2M389.5 177.8V181.0M390.0 177.7V181.2M390.5 177.9V181.3M391.0 178.1V181.2M391.5 178.0V181.5M392.0 178.1V181.3M392.5 178.4V181.0M393.0 178.2V181.1M393.5 178.2V180.7M394.0 178.4V180.8M394.5 178.5V180.6M395.0 178.0V181.3M395.5 178.2V181.3M396.0 178.0V180.9M396.5 178.2V180.9M397.0 178.3V181.0M397.5 178.0V181.0M398.0 178.0V181.6M398.5 178.2V181.0M399.0 177.9V181.3M399.5 177.8V180.9M400.0 178.3V180.9M400.5 178.0V181.3M401.0 178.2V180.9M401.5 178.0V181.1M402.0 178.1V180.8M402.5 178.5V180.7M403.0 178.3V181.2M403.5 178.5V180.5M404.0 178.4V180.7M404.5 178.3V181.1M405.0 178.0V181.3M405.5 178.4V181.0M406.0 178.0V181.1M406.5 177.7V181.1M407.0 178.4V181.1M407.5 177.8V181.3M408.0 177.5V181.7M408.5 178.1V181.5M409.0 177.8V181.5M409.5 177.6V181.6M410.0 177.7V181.9M410.5 177.8V181.5M411.0 177.9V181.5M411.5 178.1V181.2M412.0 178.2V181.4M412.5 178.0V181.5M413.0 178.5V180.7M413.5 177.7V181.1M414.0 178.5V180.6M414.5 178.6V180.6M415.0 178.3V180.9M415.5 178.4V180.7M416.0 178.2V180.8M416.5 178.2V180.8M417.0 178.1V181.2M417.5 177.8V181.3M418.0 177.9V181.3M418.5 177.6V181.3M419.0 178.2V180.9M419.5 177.4V181.4M420.0 177.5V181.7M420.5 178.1V181.2M421.0 178.0V181.1M421.5 178.0V181.3M422.0 178.1V180.9M422.5 177.9V181.3M423.0 178.0V181.5M423.5 178.0V181.2M424.0 177.8V181.3M424.5 177.7V181.5M425.0 177.5V181.6M425.5 177.7V181.8M426.0 177.8V181.9M426.5 177.0V182.3M427.0 177.5V181.5M427.5 177.0V182.2M428.0 177.2V182.2M428.5 176.8V182.6M429.0 177.0V182.4M429.5 177.0V182.0M430.0 176.8V182.3M430.5 177.0V182.0M431.0 176.8V182.1M431.5 177.1V181.6M432.0 177.0V182.1M432.5 177.1V181.9M433.0 176.7V182.2M433.5 177.6V181.7M434.0 177.7V181.6M434.5 177.6V181.2M435.0 177.9V181.8M435.5 177.7V181.6M436.0 177.9V181.4M436.5 177.8V181.1M437.0 178.2V181.2M437.5 178.1V181.0M438.0 178.1V180.9M438.5 178.5V180.9M439.0 178.5V180.8M439.5 178.5V181.0M440.0 178.2V180.9M440.5 178.5V180.8M441.0 178.3V181.1M441.5 178.1V181.1M442.0 178.5V180.7M442.5 177.6V181.5M443.0 178.1V181.1M443.5 177.9V181.2M444.0 177.6V181.4M444.5 178.2V181.0M445.0 177.6V181.6M445.5 178.1V181.3M446.0 177.9V181.6M446.5 178.4V181.0M447.0 178.3V181.0M447.5 177.9V181.5M448.0 178.4V181.1M448.5 178.0V180.9M449.0 178.1V181.2M449.5 178.3V181.1M450.0 178.6V180.6M450.5 178.6V180.6M451.0 178.0V180.8M451.5 178.1V181.0M452.0 178.3V180.9M452.5 178.3V181.0M453.0 178.4V181.0M453.5 178.3V180.8M454.0 177.8V181.1M454.5 178.1V180.9M455.0 177.6V181.6M455.5 177.7V181.7M456.0 177.9V181.4M456.5 177.6V181.5M457.0 178.0V181.4M457.5 177.9V181.5M458.0 177.6V181.4M458.5 177.6V181.7M459.0 177.3V181.9M459.5 177.7V182.0M460.0 177.5V181.4M460.5 177.6V181.5M461.0 177.8V181.7M461.5 178.0V181.2M462.0 178.0V180.9M462.5 177.9V181.5M463.0 178.4V181.0M463.5 178.1V181.1M464.0 178.1V181.1M464.5 178.2V180.7M465.0 178.5V180.8M465.5 178.5V180.8M466.0 178.3V180.7M466.5 178.6V180.9M467.0 178.4V180.9M467.5 178.3V181.0M468.0 178.2V181.4M468.5 177.9V181.3M469.0 177.7V181.3M469.5 178.0V181.5M470.0 177.6V181.3M470.5 177.4V181.7M471.0 177.5V181.5M471.5 177.6V181.6M472.0 177.5V182.0M472.5 177.3V181.9M473.0 177.4V181.4M473.5 177.7V181.3M474.0 177.9V181.8M474.5 178.0V181.3M475.0 177.9V181.3M475.5 178.0V181.4M476.0 178.1V180.9M476.5 178.0V181.2M477.0 178.1V181.2M477.5 178.1V181.2M478.0 178.4V181.1M478.5 178.5V180.8M479.0 178.6V180.8M479.5 178.1V181.1M480.0 178.7V180.5M480.5 178.2V181.2M481.0 178.7V180.6M481.5 178.1V181.1M482.0 178.1V180.9M482.5 178.5V180.9M483.0 178.4V180.8M483.5 177.9V181.0M484.0 178.1V181.0M484.5 178.1V181.1M485.0 177.8V181.4M485.5 178.1V180.9M486.0 177.9V180.9M486.5 177.9V181.2M487.0 177.9V181.0M487.5 178.1V180.9M488.0 178.6V180.6M488.5 178.4V180.7M489.0 178.3V180.7M489.5 178.3V181.1M490.0 178.4V180.7M490.5 178.3V180.9M491.0 178.0V181.1M491.5 178.2V181.1M492.0 177.8V181.3M492.5 177.8V181.4M493.0 177.7V181.6M493.5 178.2V181.1M494.0 178.2V181.1M494.5 178.1V181.3M495.0 178.1V181.0M495.5 177.9V181.2M496.0 178.2V180.9M496.5 178.0V181.1M497.0 178.2V181.1M497.5 178.4V180.8M498.0 178.0V181.0M498.5 178.3V180.9M499.0 178.2V180.8M499.5 178.5V180.9M500.0 178.5V180.6M500.5 178.8V180.5M501.0 178.6V180.8M501.5 178.5V180.7M502.0 178.4V180.9M502.5 177.9V180.9M503.0 178.3V181.0M503.5 178.2V180.9M504.0 178.2V181.0M504.5 178.1V181.0M505.0 178.1V181.0M505.5 178.2V180.9M506.0 178.2V181.2M506.5 177.7V181.6M507.0 177.7V181.8M507.5 177.5V181.7M508.0 177.8V181.1M508.5 177.9V181.3M509.0 177.5V181.9M509.5 178.2V181.2M510.0 177.8V181.1M510.5 177.7V181.5M511.0 178.3V180.9M511.5 177.7V181.1M512.0 178.0V181.2M512.5 177.8V181.4M513.0 178.2V181.1M513.5 178.4V181.1M514.0 178.5V180.7M514.5 178.7V180.7M515.0 178.3V180.9M515.5 178.7V180.6M516.0 178.4V181.0M516.5 178.1V180.8M517.0 177.9V181.2M517.5 177.6V181.2M518.0 177.9V181.1M518.5 177.4V181.5M519.0 177.9V181.3M519.5 178.0V181.5M520.0 177.7V182.0M520.5 177.3V181.6M521.0 177.3V182.0M521.5 177.6V181.5M522.0 177.5V181.6M522.5 177.7V181.4M523.0 177.2V181.9M523.5 177.7V181.4M524.0 177.8V181.4M524.5 177.9V181.1M525.0 178.0V181.1M525.5 178.4V180.6M526.0 178.6V180.7M526.5 178.5V180.8M527.0 178.2V180.7M527.5 178.2V181.4M528.0 178.0V181.2M528.5 178.2V181.3M529.0 177.9V181.0M529.5 178.0V181.0M530.0 178.0V180.9M530.5 177.7V181.2M531.0 177.9V181.6M531.5 177.8V181.5M532.0 178.0V181.6M532.5 177.7V181.4M533.0 178.3V181.1M533.5 177.7V181.2M534.0 178.0V180.9M534.5 178.1V181.1M535.0 177.9V181.0M535.5 178.1V181.2M536.0 178.6V180.5M536.5 178.5V180.8M537.0 178.2V180.8M537.5 178.2V180.8M538.0 178.5V180.8M538.5 178.1V181.1M539.0 178.3V181.0M539.5 178.1V181.0M540.0 178.1V181.1M540.5 177.7V181.1M541.0 177.6V181.4M541.5 177.6V181.5M542.0 177.5V181.4M542.5 177.4V181.9M543.0 177.7V181.4M543.5 177.6V181.9M544.0 177.8V181.4M544.5 178.0V181.1M545.0 178.2V181.0M545.5 178.3V181.1M546.0 178.0V181.4M546.5 178.3V180.9M547.0 178.6V180.7M547.5 178.4V181.1M548.0 178.6V180.6M548.5 178.4V180.6M549.0 178.5V180.9M549.5 178.0V181.1M550.0 178.0V181.1M550.5 178.3V181.0M551.0 177.9V181.2M551.5 178.2V181.2M552.0 178.2V181.2M552.5 178.2V181.0M553.0 178.0V181.2M553.5 178.2V181.3M554.0 177.8V181.2M554.5 177.9V181.2M555.0 177.9V181.6M555.5 178.2V181.4M556.0 178.2V181.1M556.5 178.1V181.0M557.0 177.8V181.0M557.5 178.1V181.0M558.0 178.3V180.8M558.5 178.1V181.1M559.0 178.5V180.6M559.5 178.8V180.6M560.0 178.3V180.9M560.5 178.8V180.4M561.0 178.4V180.6M561.5 178.8V180.6M562.0 178.2V181.1M562.5 178.5V180.5M563.0 178.1V180.8M563.5 178.4V180.9M564.0 178.3V180.8M564.5 177.9V180.9M565.0 178.0V181.3M565.5 178.3V180.9M566.0 177.8V181.3M566.5 178.2V181.0M567.0 178.0V181.5M567.5 177.9V181.2M568.0 178.3V181.0M568.5 177.8V181.5M569.0 178.0V181.3M569.5 178.0V181.0M570.0 178.0V181.0M570.5 178.3V180.9M571.0 178.3V181.0M571.5 178.5V180.9M572.0 178.5V180.6M572.5 178.1V181.2M573.0 178.5V180.9M573.5 178.5V181.0M574.0 177.7V181.6M574.5 177.5V181.8M575.0 177.4V181.8M575.5 177.3V181.9M576.0 177.1V182.4M576.5 177.4V182.0M577.0 177.2V182.3M577.5 177.0V182.7M578.0 176.7V182.5M578.5 177.2V182.0M579.0 177.3V182.6M579.5 176.8V181.9M580.0 177.1V181.5M580.5 177.4V181.4M581.0 177.6V181.6M581.5 177.7V181.5M582.0 177.7V181.3M582.5 178.5V181.0M583.0 178.1V181.0M583.5 178.5V180.7M584.0 178.2V180.8M584.5 178.0V181.1M585.0 178.3V181.0M585.5 178.0V181.5M586.0 178.2V180.8M586.5 177.7V181.4M587.0 178.1V181.3M587.5 178.1V181.1M588.0 178.0V181.5M588.5 177.4V181.7M589.0 177.7V182.0M589.5 176.8V182.1M590.0 177.4V181.6M590.5 176.9V181.9M591.0 176.3V182.1M591.5 177.0V182.1M592.0 176.9V182.3M592.5 176.7V182.4M593.0 177.1V182.3M593.5 177.0V182.4M594.0 177.0V181.9M594.5 177.0V181.8M595.0 177.6V182.1M595.5 177.4V181.8M596.0 177.7V181.8M596.5 177.7V181.4M597.0 177.9V181.5M597.5 178.0V181.7M598.0 178.0V181.4M598.5 177.6V181.6M599.0 178.0V181.7M599.5 177.8V181.3M600.0 177.5V181.6M600.5 177.3V181.4M601.0 177.5V181.6M601.5 177.8V181.1M602.0 178.0V181.4M602.5 178.0V181.1M603.0 177.1V181.9M603.5 177.4V182.0M604.0 177.2V182.1M604.5 177.0V181.6M605.0 176.9V181.9M605.5 177.0V182.3M606.0 177.1V182.6M606.5 176.7V182.7M607.0 177.3V182.2M607.5 177.6V181.5M608.0 177.1V181.6M608.5 177.5V181.3M609.0 177.3V181.8M609.5 177.4V181.6M610.0 178.0V181.5M610.5 178.4V181.1M611.0 178.2V180.9M611.5 178.5V180.8M612.0 178.3V180.9M612.5 178.3V180.7M613.0 177.9V180.9M613.5 178.4V181.1M614.0 177.9V181.3M614.5 178.1V181.3M615.0 177.7V181.4M615.5 177.5V181.4M616.0 177.4V181.6M616.5 177.5V181.9M617.0 177.4V182.1M617.5 177.4V181.8M618.0 176.4V182.4M618.5 176.2V182.5M619.0 176.5V182.8M619.5 176.2V183.4M620.0 176.0V183.4M620.5 176.5V182.4M621.0 177.0V183.1M621.5 176.7V182.5M622.0 177.0V182.2M622.5 176.7V181.8M623.0 177.5V181.5M623.5 177.5V181.8M624.0 177.2V181.5M624.5 177.6V181.5M625.0 177.8V181.8M625.5 178.2V180.7M626.0 178.1V181.1M626.5 178.0V181.3M627.0 178.0V181.0M627.5 178.0V181.1M628.0 177.9V181.3M628.5 177.8V181.5M629.0 177.6V181.6M629.5 177.8V181.4M630.0 177.8V181.5M630.5 177.7V181.4M631.0 177.6V181.6M631.5 177.7V181.8M632.0 177.9V181.0M632.5 177.9V181.7M633.0 177.9V181.5M633.5 178.3V181.0M634.0 177.5V181.6M634.5 178.0V180.9M635.0 177.9V181.4M635.5 177.7V181.4M636.0 177.8V181.8M636.5 177.9V181.4M637.0 178.0V181.7M637.5 177.6V181.6M638.0 176.9V182.4M638.5 177.8V181.8M639.0 177.1V182.1M639.5 177.7V182.2M640.0 177.0V182.4M640.5 176.9V182.1M641.0 177.5V181.7M641.5 177.2V181.9M642.0 177.5V182.4M642.5 177.6V182.3M643.0 177.7V181.6M643.5 177.5V181.4M644.0 177.8V181.9M644.5 177.7V181.5M645.0 177.9V181.4M645.5 178.2V180.9M646.0 178.5V180.9M646.5 178.0V180.9M647.0 178.3V180.8M647.5 178.2V180.8M648.0 178.6V180.5M648.5 178.2V181.0M649.0 178.7V180.4M649.5 178.3V180.8M650.0 178.2V181.0M650.5 178.0V181.6M651.0 178.0V180.8M651.5 177.8V181.3M652.0 177.7V181.3M652.5 177.9V181.5M653.0 177.5V181.5M653.5 177.5V181.6M654.0 177.4V181.8M654.5 177.0V182.2M655.0 176.7V181.8M655.5 177.1V181.5M656.0 177.3V181.4M656.5 177.1V181.9M657.0 177.5V182.1M657.5 177.5V181.9M658.0 177.8V181.4M658.5 177.9V181.1M659.0 178.3V181.1M659.5 178.6V180.7M660.0 178.1V180.7M660.5 178.5V180.5M661.0 178.6V180.8M661.5 178.7V180.7M662.0 178.4V180.7M662.5 178.1V181.4M663.0 177.9V181.4M663.5 177.9V181.1M664.0 178.3V181.1M664.5 177.9V181.5M665.0 177.5V181.9M665.5 177.8V181.3M666.0 177.8V181.8M666.5 177.1V181.8M667.0 177.3V182.0M667.5 177.3V181.5M668.0 177.0V181.9M668.5 177.6V182.0M669.0 176.9V181.7M669.5 177.6V181.7M670.0 177.5V181.5M670.5 177.5V181.4M671.0 177.8V181.1M671.5 177.9V181.8M672.0 177.9V181.4M672.5 177.7V181.5M673.0 178.0V180.9M673.5 178.3V180.9M674.0 178.1V181.2M674.5 177.9V181.5M675.0 177.9V181.5M675.5 177.7V181.3M676.0 177.8V181.3M676.5 177.4V181.9M677.0 177.6V181.5M677.5 177.5V181.9M678.0 177.1V181.8M678.5 177.8V181.5M679.0 177.4V181.9M679.5 177.7V181.8M680.0 177.6V181.6M680.5 177.9V181.4M681.0 177.9V181.7M681.5 177.7V181.4M682.0 178.1V181.6M682.5 178.4V180.9M683.0 178.1V180.9M683.5 178.4V180.7M684.0 178.1V180.9M684.5 178.4V180.5M685.0 178.2V181.0M685.5 178.6V180.7M686.0 178.4V181.0M686.5 178.1V180.8M687.0 178.2V181.3M687.5 177.9V181.2M688.0 178.0V181.3M688.5 177.7V181.5M689.0 177.3V181.6M689.5 178.0V181.2M690.0 177.8V181.3M690.5 177.7V181.7M691.0 177.3V181.5M691.5 177.8V181.3M692.0 178.0V181.3M692.5 178.1V181.4M693.0 177.8V181.3M693.5 177.8V181.3M694.0 178.0V181.1M694.5 178.2V180.9M695.0 178.0V181.0M695.5 177.9V181.2M696.0 178.5V180.8M696.5 178.0V181.2M697.0 178.0V180.8M697.5 178.5V180.8M698.0 178.2V180.8M698.5 178.3V180.9M699.0 178.2V180.8M699.5 177.7V181.3M700.0 178.2V181.1M700.5 177.9V181.2M701.0 177.9V181.6M701.5 177.2V181.9M702.0 177.9V181.2M702.5 177.2V181.6M703.0 178.1V181.4M703.5 177.7V181.3M704.0 177.5V181.3M704.5 177.9V181.0M705.0 178.3V180.9M705.5 177.7V181.6M706.0 177.7V181.2M706.5 178.1V181.0M707.0 178.3V180.8M707.5 178.4V180.9M708.0 178.4V180.9M708.5 178.3V181.1M709.0 178.1V180.9M709.5 177.9V181.3M710.0 177.9V181.4M710.5 177.7V181.3M711.0 178.1V181.4M711.5 177.5V181.7M712.0 177.5V181.5M712.5 177.6V181.4M713.0 177.2V181.6M713.5 177.8V181.7M714.0 177.0V181.9M714.5 177.7V181.5M715.0 177.3V182.3M715.5 176.7V182.5M716.0 176.6V182.3M716.5 177.4V181.9M717.0 177.1V181.9M717.5 177.2V182.0M718.0 177.4V182.1M718.5 177.2V181.5M719.0 177.6V181.9M719.5 177.3V181.6M720.0 177.7V181.6M720.5 177.8V181.8M721.0 178.1V181.3M721.5 178.0V181.2M722.0 178.1V181.0M722.5 178.0V181.3M723.0 177.8V181.1M723.5 177.6V181.3M724.0 177.4V181.3M724.5 177.4V181.9M725.0 177.4V181.8M725.5 177.4V182.1M726.0 178.0V181.7M726.5 177.3V181.8"/></g>
    <rect x="441.9" y="39" width="1.4" height="182" fill="#8cc8f6"/>
    <rect x="728" y="37" width="36" height="184" fill="#000"/>
  </svg>
</div>
<!-- vu -->
<svg class="abs" style="left:730px;top:65px" width="30" height="80" viewBox="730 65 30 80"><rect x="736" y="72.65" width="6.4" height="1.9" fill="#6e0e0e"/><rect x="748.4" y="72.65" width="6.4" height="1.9" fill="#6e0e0e"/><rect x="736" y="75.69" width="6.4" height="1.9" fill="#6e0e0e"/><rect x="748.4" y="75.69" width="6.4" height="1.9" fill="#6e0e0e"/><rect x="736" y="78.73" width="6.4" height="1.9" fill="#6e0e0e"/><rect x="748.4" y="78.73" width="6.4" height="1.9" fill="#6e0e0e"/><rect x="736" y="81.77" width="6.4" height="1.9" fill="#78aa18"/><rect x="748.4" y="81.77" width="6.4" height="1.9" fill="#78aa18"/><rect x="736" y="84.81" width="6.4" height="1.9" fill="#78aa18"/><rect x="748.4" y="84.81" width="6.4" height="1.9" fill="#78aa18"/><rect x="736" y="87.85" width="6.4" height="1.9" fill="#78aa18"/><rect x="748.4" y="87.85" width="6.4" height="1.9" fill="#78aa18"/><rect x="736" y="90.89" width="6.4" height="1.9" fill="#127a12"/><rect x="748.4" y="90.89" width="6.4" height="1.9" fill="#127a12"/><rect x="736" y="93.93" width="6.4" height="1.9" fill="#127a12"/><rect x="748.4" y="93.93" width="6.4" height="1.9" fill="#127a12"/><rect x="736" y="96.97" width="6.4" height="1.9" fill="#127a12"/><rect x="748.4" y="96.97" width="6.4" height="1.9" fill="#127a12"/><rect x="736" y="100.01" width="6.4" height="1.9" fill="#127a12"/><rect x="748.4" y="100.01" width="6.4" height="1.9" fill="#127a12"/><rect x="736" y="103.05" width="6.4" height="1.9" fill="#127a12"/><rect x="748.4" y="103.05" width="6.4" height="1.9" fill="#127a12"/><rect x="736" y="106.09" width="6.4" height="1.9" fill="#127a12"/><rect x="748.4" y="106.09" width="6.4" height="1.9" fill="#127a12"/><rect x="736" y="109.13" width="6.4" height="1.9" fill="#127a12"/><rect x="748.4" y="109.13" width="6.4" height="1.9" fill="#127a12"/><rect x="736" y="112.17" width="6.4" height="1.9" fill="#127a12"/><rect x="748.4" y="112.17" width="6.4" height="1.9" fill="#127a12"/><rect x="736" y="115.21" width="6.4" height="1.9" fill="#127a12"/><rect x="748.4" y="115.21" width="6.4" height="1.9" fill="#127a12"/><rect x="736" y="118.25" width="6.4" height="1.9" fill="#127a12"/><rect x="748.4" y="118.25" width="6.4" height="1.9" fill="#127a12"/><rect x="736" y="121.29" width="6.4" height="1.9" fill="#127a12"/><rect x="748.4" y="121.29" width="6.4" height="1.9" fill="#127a12"/><rect x="736" y="124.33" width="6.4" height="1.9" fill="#127a12"/><rect x="748.4" y="124.33" width="6.4" height="1.9" fill="#127a12"/><rect x="736" y="127.37" width="6.4" height="1.9" fill="#127a12"/><rect x="748.4" y="127.37" width="6.4" height="1.9" fill="#127a12"/><rect x="736" y="130.41" width="6.4" height="1.9" fill="#127a12"/><rect x="748.4" y="130.41" width="6.4" height="1.9" fill="#127a12"/><rect x="736" y="133.45" width="6.4" height="1.9" fill="#127a12"/><rect x="748.4" y="133.45" width="6.4" height="1.9" fill="#127a12"/><rect x="736" y="136.49" width="6.4" height="1.9" fill="#127a12"/><rect x="748.4" y="136.49" width="6.4" height="1.9" fill="#127a12"/></svg>
<div class="sbtn" style="top:44.5px"><span class="c"></span>
  <svg class="abs" style="left:0;top:0" width="18" height="18"><circle cx="9" cy="9" r="4.8" fill="none" stroke="#c8c8c8" stroke-width="1"/><path d="M9 6.2V10.2" stroke="#d0d0d0" stroke-width="1.1"/><path d="M7.1 9.2L9 11.6L10.9 9.2Z" fill="#d0d0d0"/></svg></div>
<div class="abs" style="left:755px;top:145px;width:6px;height:10px;background:#1c1c1c"></div><div class="abs" style="left:755px;top:169px;width:6px;height:10px;background:#1c1c1c"></div>
<div class="sbtn" style="top:145px"><span class="c"></span>
  <svg class="abs" style="left:0;top:0" width="18" height="18"><circle cx="9" cy="9" r="4.8" fill="none" stroke="#c8c8c8" stroke-width="1"/><path d="M7.5 6.6L11.4 9L7.5 11.4Z" fill="#d0d0d0"/></svg></div>
<div class="sbtn" style="top:169px"><span class="c"></span>
  <svg class="abs" style="left:0;top:0" width="18" height="18"><circle cx="9" cy="9" r="4.8" fill="none" stroke="#c8c8c8" stroke-width="1"/><circle cx="9" cy="9" r="2.7" fill="#d4d4d4"/></svg></div>
<div class="sbtn" style="top:193px"><span class="c"></span>
  <svg class="abs" style="left:0;top:0" width="18" height="18"><circle cx="9" cy="9" r="4.8" fill="none" stroke="#c8c8c8" stroke-width="1"/><path d="M7.2 10.8L11 7" stroke="#d0d0d0" stroke-width="1.6" stroke-linecap="round"/></svg></div>

<!-- tabs -->
<div id="mtx"></div>
<svg class="abs" style="left:0;top:0" width="1024" height="473">
  <defs><linearGradient id="tg" x1="0" y1="0" x2="0" y2="1"><stop offset="0" stop-color="#232323"/><stop offset="1" stop-color="#191919"/></linearGradient></defs><rect x="194" y="231" width="577" height="20" fill="url(#tg)"/><path d="M208.2 251L215.2 231H276.0L284.0 251Z" fill="#3c3c3c"/><text transform="translate(246.1 244.8) scale(0.87 1)" font-family="Liberation Sans" font-size="9.75" font-weight="bold" fill="#939393" stroke="#939393" stroke-width="0.2" text-anchor="middle">Grains</text><path d="M284.0 251L291.0 231H351.8L359.8 251Z" fill="#3c3c3c"/><text transform="translate(321.9 244.8) scale(0.87 1)" font-family="Liberation Sans" font-size="9.75" font-weight="bold" fill="#939393" stroke="#939393" stroke-width="0.2" text-anchor="middle">LFO</text><path d="M359.8 251L366.8 231H427.6L435.6 251Z" fill="#3c3c3c"/><text transform="translate(397.7 244.8) scale(0.87 1)" font-family="Liberation Sans" font-size="9.75" font-weight="bold" fill="#939393" stroke="#939393" stroke-width="0.2" text-anchor="middle">VCF</text><path d="M435.6 251L442.6 231H503.4L511.4 251Z" fill="#3c3c3c"/><text transform="translate(473.5 244.8) scale(0.87 1)" font-family="Liberation Sans" font-size="9.75" font-weight="bold" fill="#939393" stroke="#939393" stroke-width="0.2" text-anchor="middle">FEG</text><path d="M587.2 251L594.2 231H655.0L663.0 251Z" fill="#3c3c3c"/><text transform="translate(625.1 244.8) scale(0.87 1)" font-family="Liberation Sans" font-size="9.75" font-weight="bold" fill="#939393" stroke="#939393" stroke-width="0.2" text-anchor="middle">WaveGlide</text><path d="M663.0 251L670.0 231H730.8L738.8 251Z" fill="#3c3c3c"/><text transform="translate(700.9 244.8) scale(0.87 1)" font-family="Liberation Sans" font-size="9.75" font-weight="bold" fill="#939393" stroke="#939393" stroke-width="0.2" text-anchor="middle">Effects</text><path d="M509.6 253L518.9 231.6H578.3L587.6 253Z" fill="#2e2e2e"/><path d="M508.8 251.5L518.6 231.1H578.6L588.4 251.5" fill="none" stroke="#a0a0a0" stroke-width="1.1"/><text transform="translate(548.5 244.8) scale(0.87 1)" font-family="Liberation Sans" font-size="9.75" font-weight="bold" fill="#dcdcdc" stroke="#dcdcdc" stroke-width="0.2" text-anchor="middle">Matrix</text>
  <path d="M202 304.4H763" stroke="#474747" stroke-width="1"/><path d="M202 330.8H763" stroke="#474747" stroke-width="1"/><path d="M202 357.2H763" stroke="#474747" stroke-width="1"/><path d="M202 383.6H763" stroke="#8a8a8a" stroke-width="1"/><path d="M202 410.0H763" stroke="#474747" stroke-width="1"/><path d="M202 278.5H763" stroke="#8a8a8a" stroke-width="1.2"/><path d="M298.1 278V436" stroke="#7a7a7a" stroke-width="1"/><path d="M333.9 278V436" stroke="#7a7a7a" stroke-width="1"/><path d="M369.8 278V436" stroke="#7a7a7a" stroke-width="1"/><path d="M405.6 278V436" stroke="#7a7a7a" stroke-width="1"/><path d="M441.5 278V436" stroke="#7a7a7a" stroke-width="1"/><path d="M477.3 278V436" stroke="#7a7a7a" stroke-width="1"/><path d="M513.1 278V436" stroke="#7a7a7a" stroke-width="1"/><path d="M549.0 278V436" stroke="#7a7a7a" stroke-width="1"/><path d="M584.8 278V436" stroke="#7a7a7a" stroke-width="1"/><path d="M620.7 278V436" stroke="#7a7a7a" stroke-width="1"/><path d="M656.5 278V436" stroke="#7a7a7a" stroke-width="1"/><path d="M692.3 278V436" stroke="#7a7a7a" stroke-width="1"/><path d="M728.2 278V436" stroke="#7a7a7a" stroke-width="1"/><path d="M412 281.5H423.6" stroke="#aaa" stroke-width="1.2"/><path d="M423.6 281.5H433" stroke="#f0a020" stroke-width="1.6"/><path d="M433 281.5H435.3" stroke="#aaa" stroke-width="1.2"/><path d="M590.8 387.5H602.6" stroke="#aaa" stroke-width="1.2"/><path d="M602.6 387.5H614.4" stroke="#f0a020" stroke-width="1.6"/>
</svg>
<div class="hd" style="left:298.1px;color:#e8c637"><i class="x">FEG1</i></div><div class="hd" style="left:333.9px;color:#e8c637"><i class="x">FEG2</i></div><div class="hd" style="left:369.8px;color:#e8c637"><i class="x">FEG3</i></div><div class="hd" style="left:405.6px;color:#e8c637"><i class="x">FEG4</i></div><div class="hd" style="left:441.5px;color:#f0a030"><i class="x">LFO1</i></div><div class="hd" style="left:477.3px;color:#f0a030"><i class="x">LFO2</i></div><div class="hd" style="left:513.1px;color:#e0e0e0"><i class="x">NOTE</i></div><div class="hd" style="left:549.0px;color:#e0e0e0"><i class="x">VEL</i></div><div class="hd" style="left:584.8px;color:#e0e0e0"><i class="x">BEND</i></div><div class="hd" style="left:620.7px;color:#e0e0e0"><i class="x">MOD</i></div><div class="hd" style="left:656.5px;color:#e0e0e0"><i class="x">CC74</i></div><div class="hd" style="left:692.3px;color:#e0e0e0"><i class="x">AT</i></div><div class="hd" style="left:728.2px;color:#e0e0e0"><i class="x">RND</i></div>
<div class="mb" style="left:206px;width:44px"><i class="x">Defaults</i></div>
<div class="mb" style="left:252px;width:43px"><i class="x">Velocity</i></div>
<div class="rl" style="top:286.3px"><i class="x r">VCF 1 Cutoff</i></div>
<div class="rl" style="top:312.7px"><i class="x r">VCF 1 Resonance</i></div>
<div class="rl" style="top:339.5px"><i class="x r">VCF 2 Cutoff</i></div>
<div class="rl" style="top:365.9px"><i class="x r">VCF 2 Resonance</i></div>
<div class="rl" style="top:392.4px"><i class="x r">Osc Tune</i></div>
<div class="rl" style="top:419.2px"><i class="x r">Osc Shape</i></div>
<div class="hd" style="left:405.5px;top:286.3px;font-size:8.47px"><i class="x">79</i></div>
<div class="hd" style="left:584.5px;top:392.4px;font-size:8.47px"><i class="x">100</i></div>

<div class="abs" style="left:380px;top:458px;width:263px;height:6px;border-radius:3px;background:#000"></div>

<!-- right icons -->
<svg class="abs" style="left:940px;top:5px" width="60" height="45" viewBox="940 5 60 45">
  <path d="M954.3 20.7L956.2 14.5H965.2L969.5 19.1H985V20.7Z" fill="#0a0a0a"/>
  <path d="M951.9 23.3H986.9L982.8 43H973.8V38.8H978.2L969.5 29.9L960.7 38.8H965.2V43H956.2Z" fill="#0a0a0a"/>
</svg>
<svg class="abs" style="left:940px;top:50px" width="60" height="50" viewBox="940 50 60 50">
  <path d="M964.05 91.05A16.45 16.45 0 1 1 975.05 91.05A5.65 5.65 0 0 0 964.05 91.05Z" fill="none" stroke="#0a0a0a" stroke-width="2.9" stroke-linejoin="miter"/>
  <circle cx="969.4" cy="64.5" r="2.3" fill="#0a0a0a"/><circle cx="961.7" cy="67.7" r="2.3" fill="#0a0a0a"/><circle cx="977.2" cy="67.7" r="2.3" fill="#0a0a0a"/><circle cx="958.5" cy="75.3" r="2.3" fill="#0a0a0a"/><circle cx="980.5" cy="75.3" r="2.3" fill="#0a0a0a"/>
</svg>
<svg class="abs" style="left:925px;top:400px" width="90" height="50" viewBox="925 400 90 50">
  <rect x="935.4" y="410.2" width="68.4" height="32" rx="3.8" fill="#fff" stroke="#0a0a0a" stroke-width="2"/><rect x="942.50" y="411" width="1.3" height="30.5" fill="#0a0a0a"/><rect x="952.00" y="411" width="1.3" height="30.5" fill="#0a0a0a"/><rect x="961.50" y="411" width="1.3" height="30.5" fill="#0a0a0a"/><rect x="968.70" y="411" width="1.3" height="30.5" fill="#0a0a0a"/><rect x="976.60" y="411" width="1.3" height="30.5" fill="#0a0a0a"/><rect x="985.90" y="411" width="1.3" height="30.5" fill="#0a0a0a"/><rect x="995.20" y="411" width="1.3" height="30.5" fill="#0a0a0a"/><rect x="940.20" y="411" width="5.30" height="19.1" fill="#0a0a0a"/><rect x="949.50" y="411" width="5.80" height="19.1" fill="#0a0a0a"/><rect x="959.10" y="411" width="5.50" height="19.1" fill="#0a0a0a"/><rect x="973.90" y="411" width="5.90" height="19.1" fill="#0a0a0a"/><rect x="983.20" y="411" width="5.90" height="19.1" fill="#0a0a0a"/><rect x="992.50" y="411" width="6.10" height="19.1" fill="#0a0a0a"/>
</svg>
</body></html>
